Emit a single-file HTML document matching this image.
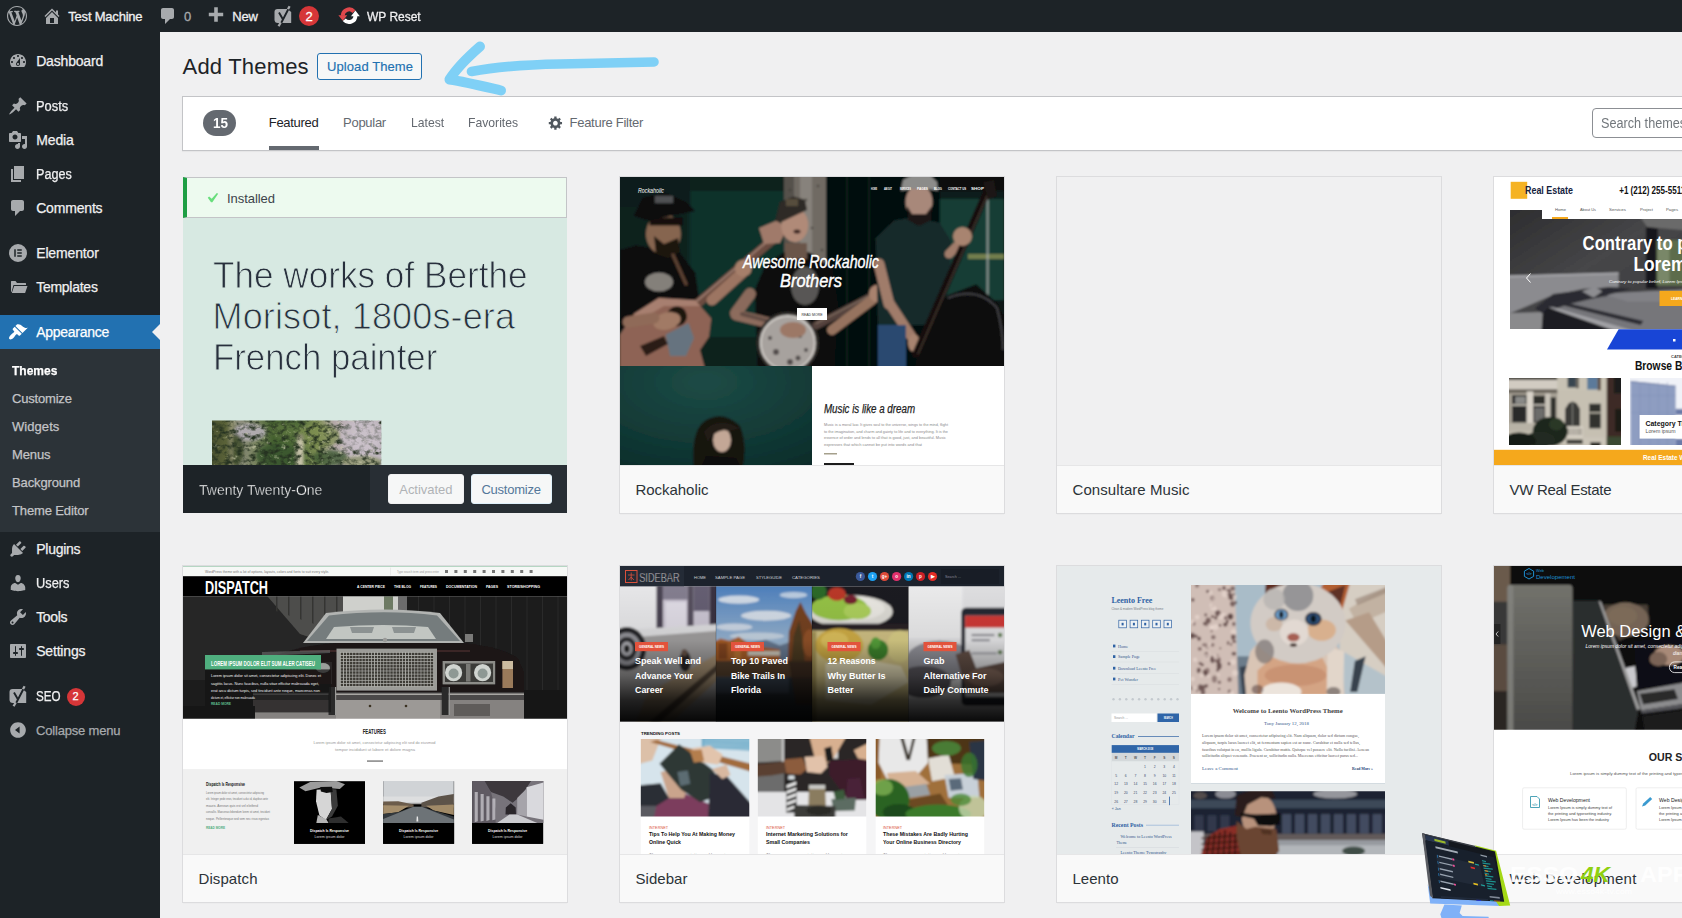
<!DOCTYPE html>
<html lang="en">
<head>
<meta charset="utf-8">
<title>Add Themes ‹ Test Machine — WordPress</title>
<style>
*{box-sizing:border-box;margin:0;padding:0}
html,body{width:1682px;height:918px;overflow:hidden;background:#f0f0f1;font-family:"Liberation Sans",sans-serif;color:#3c434a}
#wrap{position:relative;width:1682px;height:918px;overflow:hidden}
.abs{position:absolute}
.t{position:absolute;white-space:nowrap;line-height:1}
#bar{position:absolute;left:0;top:0;width:1682px;height:32px;background:#1d2327}
#bar .t{color:#f0f0f1;-webkit-text-stroke-width:0.3px}
#side{position:absolute;left:0;top:0;width:160px;height:918px;background:#1d2327}
#side .t{color:#f0f0f1;-webkit-text-stroke-width:0.25px}
#side svg.ic{position:absolute;left:8px;width:20px;height:20px;fill:#a7aaad}
.card{position:absolute;width:386px;height:338px;background:#fff;border:1px solid #dcdcde;box-shadow:0 1px 1px -1px rgba(0,0,0,.1);overflow:hidden}
.shot{position:absolute;left:0;top:0;width:384px;height:288px;overflow:hidden}
.shot svg{position:absolute;left:0;top:0}
.name{position:absolute;left:0;top:288px;width:384px;height:48px;background:#f9f9f9;border-top:1px solid #e6e6e7}
</style>
</head>
<body>
<div id="wrap">
<div id="main">
<span class="t" style="left:182.60px;top:55.88px;font-size:22px;letter-spacing:0.185px;color:#1d2327;">Add Themes</span>
<div class="abs" style="left:317px;top:53px;width:105px;height:27px;border:1px solid #2271b1;border-radius:3px;background:#f6f7f7"></div>
<span class="t" style="left:327.00px;top:60.00px;font-size:13px;letter-spacing:0.088px;color:#2271b1;-webkit-text-stroke:0.15px #2271b1;">Upload Theme</span>
<svg class="abs" style="left:430px;top:36px;width:240px;height:64px" viewBox="430 36 240 64" fill="none" stroke="#7fd0f6" stroke-linecap="round" stroke-linejoin="round"><path d="M480 46.500C468 57 456 69 449.500 79.500C466 82 486 87 501 90.500" stroke-width="10"/><path d="M471.500 71.500C500 66 530 64.500 560 64C595 63 625 62.500 654 62" stroke-width="9.600"/></svg>
<div class="abs" style="left:182px;top:96px;width:1520px;height:55px;background:#fff;border:1px solid #c3c4c7;box-shadow:0 1px 1px rgba(0,0,0,.04)"></div>
<div class="abs" style="left:203px;top:110px;width:33px;height:26px;border-radius:13px;background:#646970"></div>
<span class="t" style="left:212.50px;top:116.15px;font-size:14px;transform:scaleX(0.9632);transform-origin:0 0;color:#fff;font-weight:bold;">15</span>
<span class="t" style="left:268.80px;top:116.00px;font-size:13px;letter-spacing:-0.305px;color:#1d2327;">Featured</span>
<div class="abs" style="left:269px;top:146px;width:50px;height:4px;background:#646970"></div>
<span class="t" style="left:343.10px;top:116.00px;font-size:13px;letter-spacing:-0.285px;color:#646970;">Popular</span>
<span class="t" style="left:410.50px;top:116.00px;font-size:13px;transform:scaleX(0.9347);transform-origin:0 0;color:#646970;">Latest</span>
<span class="t" style="left:467.90px;top:116.00px;font-size:13px;transform:scaleX(0.9371);transform-origin:0 0;color:#646970;">Favorites</span>
<svg class="abs" style="left:547.800px;top:114.800px;width:15.600px;height:15.600px" viewBox="0 0 20 20" fill="#50575e"><path fill-rule="evenodd" d="M18 12h-2.180c-.170.700-.440 1.350-.810 1.930l1.540 1.540-2.100 2.100-1.540-1.540c-.580.360-1.230.630-1.910.790V19H8v-2.180c-.680-.160-1.330-.430-1.910-.790l-1.540 1.540-2.120-2.120 1.540-1.540c-.360-.580-.630-1.230-.790-1.910H1V9.030h2.170c.160-.700.440-1.350.800-1.940L2.430 5.550l2.100-2.100 1.540 1.540c.580-.370 1.240-.640 1.930-.810V2h3v2.180c.680.160 1.330.430 1.910.790l1.540-1.540 2.120 2.120-1.540 1.540c.360.590.640 1.240.800 1.940H18V12zm-8.500 1.500c1.660 0 3-1.340 3-3s-1.340-3-3-3-3 1.340-3 3 1.340 3 3 3z"/></svg>
<span class="t" style="left:569.50px;top:116.00px;font-size:13px;letter-spacing:-0.270px;color:#646970;">Feature Filter</span>
<div class="abs" style="left:1592px;top:108px;width:120px;height:30px;border:1px solid #8c8f94;border-radius:4px;background:#fff"></div>
<span class="t" style="left:1601.30px;top:115.95px;font-size:14px;transform:scaleX(0.9040);transform-origin:0 0;color:#72777c;">Search themes...</span>
<div class="abs" style="left:183px;top:177px;width:384px;height:336px;overflow:hidden;background:#d7e9e2"><div class="abs" style="left:-183px;top:-177px">
<div class="abs" style="left:183px;top:177px;width:384px;height:41px;background:#edfaef;border:1px solid #c3c4c7;border-left:4px solid #1e9e44"></div>
<svg class="abs" style="left:202px;top:188px;width:20px;height:20px" viewBox="0 0 20 20" fill="#68de7c"><path d="M14.830 4.890l1.340.940-5.810 8.380H9.020L5.780 9.670l1.340-1.250 2.570 2.400z"/></svg>
<span class="t" style="left:227.00px;top:192.00px;font-size:13px;letter-spacing:-0.053px;color:#3c434a;">Installed</span>
<span class="t" style="left:212.60px;top:257.93px;font-size:36px;transform:scaleX(0.9763);transform-origin:0 0;color:#28303d;-webkit-text-stroke:0.9px #d7e9e2;">The works of Berthe</span>
<span class="t" style="left:212.60px;top:298.83px;font-size:36px;letter-spacing:0.133px;color:#28303d;-webkit-text-stroke:0.9px #d7e9e2;">Morisot, 1800s-era</span>
<span class="t" style="left:212.60px;top:339.73px;font-size:36px;transform:scaleX(0.9663);transform-origin:0 0;color:#28303d;-webkit-text-stroke:0.9px #d7e9e2;">French painter</span>
<svg class="abs" style="left:212px;top:420px;width:170px;height:46px" viewBox="212 420 170 46" preserveAspectRatio="none"><defs><linearGradient id="pg" x1="0" x2="1"><stop offset="0" stop-color="#4a5230"/><stop offset=".08" stop-color="#5a6238"/><stop offset=".16" stop-color="#8c8c7c"/><stop offset=".26" stop-color="#76825c"/><stop offset=".36" stop-color="#44602f"/><stop offset=".5" stop-color="#4f6a38"/><stop offset=".62" stop-color="#7f8e54"/><stop offset=".72" stop-color="#b4a8a8"/><stop offset=".85" stop-color="#c6bcc6"/><stop offset="1" stop-color="#bfb6be"/></linearGradient>
<filter id="pn" x="0" y="0" width="100%" height="100%" color-interpolation-filters="sRGB"><feTurbulence type="fractalNoise" baseFrequency="0.16 0.2" numOctaves="3" seed="7" result="n"/><feColorMatrix in="n" type="matrix" values="0 0 0 0 0.15  0 0 0 0 0.2  0 0 0 0 0.13  3 0 0 0 -1.3" result="d"/><feColorMatrix in="n" type="matrix" values="0 0 0 0 0.8  0 0 0 0 0.8  0 0 0 0 0.68  0 3 0 0 -1.95" result="l"/><feComposite in="d" in2="SourceGraphic" operator="over" result="a"/><feComposite in="l" in2="a" operator="over"/></filter>
<filter id="pb"><feGaussianBlur stdDeviation="1.5"/></filter><clipPath id="pc"><rect x="212" y="420.4" width="169.3" height="46"/></clipPath></defs>
<g clip-path="url(#pc)"><g filter="url(#pn)"><rect x="212" y="420" width="170" height="46" fill="url(#pg)"/>
<g filter="url(#pb)"><ellipse cx="250" cy="432" rx="16" ry="9" fill="#b9b2bc" opacity=".85"/><ellipse cx="236" cy="450" rx="8" ry="16" fill="#3c4a28" opacity=".8"/><ellipse cx="278" cy="456" rx="22" ry="12" fill="#3a5630" opacity=".85"/><ellipse cx="318" cy="436" rx="22" ry="12" fill="#7d8e50" opacity=".7"/><ellipse cx="330" cy="458" rx="18" ry="8" fill="#3f5a32" opacity=".8"/><ellipse cx="285" cy="430" rx="14" ry="8" fill="#5d7440" opacity=".8"/><rect x="296.500" y="440" width="7" height="28" fill="#d2cab4" opacity=".9"/><ellipse cx="300" cy="437" rx="4" ry="3" fill="#8a8a70"/><ellipse cx="362" cy="462" rx="20" ry="6" fill="#8a9068" opacity=".8"/><rect x="230" y="420" width="2.500" height="46" fill="#b7b08c" opacity=".6"/><ellipse cx="365" cy="438" rx="14" ry="12" fill="#d2c8d0" opacity=".7"/></g></g><g filter="url(#pb)"><ellipse cx="362" cy="436" rx="22" ry="15" fill="#c8bec8" opacity=".6"/></g></g></svg><div class="abs" style="left:183px;top:465px;width:187px;height:48px;background:#1d2327"></div>
<div class="abs" style="left:370px;top:465px;width:197px;height:48px;background:#282e34"></div>
<span class="t" style="left:198.50px;top:482.30px;font-size:15px;transform:scaleX(0.9328);transform-origin:0 0;color:#fff;-webkit-text-stroke:0.35px #1d2327;">Twenty Twenty-One</span>
<div class="abs" style="left:388px;top:474px;width:76px;height:30px;border:1px solid #f0f0f1;border-radius:3px;background:#f6f7f7"></div>
<span class="t" style="left:399.30px;top:482.50px;font-size:13px;letter-spacing:-0.047px;color:#b0b3b6;">Activated</span>
<div class="abs" style="left:470.500px;top:474px;width:81px;height:30px;border:1.500px solid #dff0fa;border-radius:3px;background:#f6f7f7"></div>
<span class="t" style="left:481.40px;top:482.50px;font-size:13px;letter-spacing:-0.226px;color:#54779a;">Customize</span>
</div></div>
<div class="card" style="left:619px;top:176px">
<div class="shot"><div class="abs" style="left:-620px;top:-177px"><svg class="abs" style="left:620px;top:177px;width:384px;height:288px" viewBox="620 177 384 288" preserveAspectRatio="none"><defs><filter id="b1" x="-5%" y="-5%" width="110%" height="110%"><feGaussianBlur stdDeviation=".8"/></filter><filter id="b1b" x="-5%" y="-5%" width="110%" height="110%"><feGaussianBlur stdDeviation="3"/></filter><radialGradient id="tg" cx=".45" cy=".2" r=".9"><stop offset="0" stop-color="#1d4b46"/><stop offset=".6" stop-color="#123a36"/><stop offset="1" stop-color="#0c2c2a"/></radialGradient><clipPath id="c1"><rect x="620" y="177" width="384" height="189"/></clipPath><clipPath id="c1b"><rect x="620" y="366" width="192" height="99"/></clipPath></defs><rect x="620" y="177" width="384" height="288" fill="#fff" /><g clip-path="url(#c1)"><g filter="url(#b1)"><rect x="610" y="170" width="400" height="200" fill="#08100f" /><rect x="610" y="170" width="176" height="200" fill="#0a211f" /><rect x="688" y="191" width="96" height="146" fill="#0d302b" /><rect x="688" y="191" width="3" height="146" fill="#0a2a26" /><rect x="730" y="191" width="2" height="146" fill="#0c302b" /><rect x="620" y="177" width="70" height="30" fill="#091c1a" /><rect x="784" y="170" width="42" height="140" fill="#6f6a64" /><rect x="784" y="170" width="10" height="140" fill="#55514c" /><rect x="800" y="170" width="12" height="140" fill="#87827b" /><circle cx="790" cy="190" r="1.300" fill="#3c3834" opacity=".7"/><circle cx="806" cy="200" r="1.300" fill="#3c3834" opacity=".7"/><circle cx="818" cy="186" r="1.300" fill="#3c3834" opacity=".7"/><circle cx="796" cy="214" r="1.300" fill="#3c3834" opacity=".7"/><circle cx="812" cy="228" r="1.300" fill="#3c3834" opacity=".7"/><circle cx="822" cy="250" r="1.300" fill="#3c3834" opacity=".7"/><circle cx="804" cy="262" r="1.300" fill="#3c3834" opacity=".7"/><circle cx="790" cy="246" r="1.300" fill="#3c3834" opacity=".7"/><circle cx="816" cy="280" r="1.300" fill="#3c3834" opacity=".7"/><circle cx="798" cy="290" r="1.300" fill="#3c3834" opacity=".7"/><rect x="826" y="170" width="114" height="200" fill="#060b0a" /><rect x="846" y="177" width="2" height="190" fill="#0e1a18" /><rect x="868" y="177" width="2" height="190" fill="#0e1a18" /><rect x="940" y="191" width="64" height="114" fill="#173c36" /><rect x="940" y="191" width="64" height="8" fill="#0c1f1c" /><rect x="968" y="254" width="36" height="5" fill="#8a8f55" opacity=".8"/><rect x="940" y="300" width="64" height="70" fill="#0b1513" /><rect x="986.5" y="184" width="2.2" height="160" fill="#a9aeaa" opacity=".75"/><path d="M620.0 250.0 L636.0 245.5 L679.4 252.3 L695.3 272.9 L700.0 304.8 L660.0 320.0 L620.0 330.0 Z" fill="#0b0c0d" /><ellipse cx="663.400" cy="234" rx="17.500" ry="20.500" fill="#86654f"/><path d="M654.0 236.0 L664.0 244.0 L678.0 238.0 L680.0 252.0 L668.0 258.0 L656.0 254.0 Z" fill="#1c1410" /><rect x="649.7" y="217.5" width="33" height="8" fill="#14100e" /><path d="M633.7 215.8 L642.8 197.5 L665.7 193.0 L686.2 202.0 L695.3 211.0 L677.0 214.7 L647.4 220.4 Z" fill="#0c0e10" /><rect x="655" y="196" width="18" height="7" fill="#cfcfcf" opacity=".35"/><ellipse cx="659" cy="282" rx="14" ry="9.500" fill="#9a958e" opacity=".85"/><path d="M673 255 L686 284" stroke="#5a4030" stroke-width="3.5" stroke-linecap="round" fill="none" /><path d="M697 304 L780 233.5" stroke="#6b4c41" stroke-width="9" stroke-linecap="round" fill="none" /><path d="M697 301 L780 230.5" stroke="#a98a7c" stroke-width="2" stroke-linecap="round" fill="none" opacity=".7"/><path d="M759.0 228.0 L778.0 220.0 L786.0 230.0 L780.0 243.0 L764.0 244.0 Z" fill="#a07a6a" /><path d="M620.0 334.5 L633.7 314.0 L658.8 298.0 L695.3 300.3 L711.3 318.6 L709.0 336.8 L700.0 350.0 L706.0 372.0 L620.0 372.0 Z" fill="#8e6455" /><path d="M633.7 314.0 L658.8 298.0 L695.3 300.3 L700.0 306.0 L664.0 306.0 L640.0 320.0 Z" fill="#ae8676" opacity=".8"/><circle cx="677" cy="316.300" r="10" fill="#1a1210"/><path d="M665.7 334.5 L688.5 323.0 L694.0 338.0 L686.0 356.0 L670.0 356.0 Z" fill="#66737f" /><path d="M640.0 346.0 L664.0 336.0 L668.0 344.0 L646.0 356.0 Z" fill="#2a1c18" /><path d="M712 300 L742 273" stroke="#9c7562" stroke-width="11" stroke-linecap="round" fill="none" /><circle cx="743.300" cy="268.300" r="8.500" fill="#a67f6a"/><ellipse cx="667" cy="321" rx="14" ry="8.500" fill="#a17a65" transform="rotate(-15 667 321)"/><path d="M628 322 L654 318" stroke="#8f6a58" stroke-width="11" stroke-linecap="round" fill="none" /><path d="M754.7 290.0 L766.0 263.8 L784.4 252.3 L809.5 252.3 L832.3 268.3 L838.0 304.8 L834.0 372.0 L758.0 372.0 Z" fill="#0a0b0c" /><rect x="785" y="243" width="22" height="16" fill="#6a5448" /><ellipse cx="794.700" cy="225" rx="13.500" ry="17" fill="#b08a78"/><path d="M775.3 220.4 L779.8 202.0 L793.5 196.4 L805.0 199.8 L807.0 210.0 L779.8 222.7 Z" fill="#2e2a25" /><rect x="786" y="199" width="12" height="7" fill="#6a5e48" opacity=".7"/><ellipse cx="797" cy="231.500" rx="3.500" ry="2" fill="#3a2420"/><ellipse cx="805" cy="286" rx="14" ry="19" fill="#b8b4ac" opacity=".45"/><path d="M750 294 L736 313" stroke="#8a6a5c" stroke-width="12" stroke-linecap="round" fill="none" /><path d="M736 315 L790 328" stroke="#8d6c5d" stroke-width="11" stroke-linecap="round" fill="none" /><path d="M742 314 L776 323" stroke="#4a3a36" stroke-width="4" stroke-linecap="round" fill="none" opacity=".6"/><circle cx="787.800" cy="343" r="31" fill="#34302e"/><circle cx="787.800" cy="343" r="27" fill="#a7a29e"/><circle cx="787.800" cy="343" r="27" fill="none" stroke="#cfcbc6" stroke-width="2"/><circle cx="776" cy="352" r="3" fill="#3e3a38" opacity=".8"/><circle cx="798" cy="358" r="2.5" fill="#3e3a38" opacity=".8"/><circle cx="800" cy="336" r="2" fill="#3e3a38" opacity=".8"/><circle cx="770" cy="338" r="2" fill="#3e3a38" opacity=".8"/><circle cx="790" cy="362" r="3" fill="#3e3a38" opacity=".8"/><circle cx="782" cy="330" r="1.5" fill="#3e3a38" opacity=".8"/><circle cx="806" cy="350" r="2" fill="#3e3a38" opacity=".8"/><path d="M816.3 325.4 L926 268.3" stroke="#54433c" stroke-width="8" stroke-linecap="round" fill="none" /><path d="M816.3 323.4 L926 266.3" stroke="#8f7a6e" stroke-width="1.5" stroke-linecap="round" fill="none" opacity=".7"/><path d="M900.8 270.0 L922.0 258.0 L930.0 268.0 L926.0 284.0 L908.0 286.0 Z" fill="#1c1816" /><circle cx="906" cy="268" r="1.200" fill="#e8e8e8"/><circle cx="914" cy="263" r="1.200" fill="#e8e8e8"/><circle cx="922" cy="262" r="1.200" fill="#e8e8e8"/><circle cx="912" cy="282" r="1.200" fill="#e8e8e8"/><circle cx="920" cy="280" r="1.200" fill="#e8e8e8"/><ellipse cx="793" cy="330" rx="13" ry="8" fill="#9c7866"/><path d="M832 330 L872 300" stroke="#96735f" stroke-width="10" stroke-linecap="round" fill="none" /><circle cx="878" cy="293.400" r="9" fill="#a8826e"/><path d="M875.7 238.0 L894.0 220.4 L914.5 217.0 L939.6 222.7 L951.0 241.0 L950.0 272.9 L942.0 325.0 L878.0 325.0 Z" fill="#14292a" /><ellipse cx="919" cy="202" rx="13.500" ry="17" fill="#a8887a"/><path d="M907.0 206.0 L912.0 214.0 L926.0 214.0 L932.0 206.0 L931.0 220.0 L919.0 226.0 L908.0 220.0 Z" fill="#1c1614" /><path d="M900.8 190.7 L903.0 180.0 L912.0 175.0 L930.0 175.0 L937.0 182.0 L938.0 190.7 L920.0 188.0 Z" fill="#8c8c8a" /><path d="M879 264 L889 304" stroke="#a07c6a" stroke-width="11" stroke-linecap="round" fill="none" /><path d="M890 304 L911 336" stroke="#a07c6a" stroke-width="10" stroke-linecap="round" fill="none" /><ellipse cx="914" cy="343" rx="6" ry="9" fill="#a88470"/><rect x="878" y="325" width="28" height="46" fill="#2b4a70" /><path d="M949 254 L961 242" stroke="#a07c6a" stroke-width="9" stroke-linecap="round" fill="none" /><path d="M914.5 372.0 L923.6 327.7 L946.5 295.7 L976.2 284.3 L999.0 304.8 L1010.0 336.8 L1010.0 372.0 Z" fill="#0d0d0f" /><path d="M948 298 Q978 286 997 308 Q1003 330 1003 350" stroke="#4a4a4e" stroke-width="1.500" fill="none"/><path d="M987.6 190 L916 354" stroke="#17110f" stroke-width="7.5" stroke-linecap="round" fill="none" stroke-linecap="butt"/><path d="M989.6 190 L918 354" stroke="#5a4a42" stroke-width="1.2" stroke-linecap="round" fill="none" opacity=".7"/><path d="M983.0 182.0 L994.0 180.0 L997.0 196.0 L988.0 200.0 Z" fill="#1a1412" /><circle cx="962.500" cy="236.400" r="9.500" fill="#a8846f"/></g></g><text x="811" y="268" text-anchor="middle" font-family="Liberation Sans, sans-serif" font-style="italic" font-size="18" fill="#fff" stroke="#fff" stroke-width=".45" textLength="136" lengthAdjust="spacingAndGlyphs">Awesome Rockaholic</text><text x="811" y="287" text-anchor="middle" font-family="Liberation Sans, sans-serif" font-style="italic" font-size="18" fill="#fff" stroke="#fff" stroke-width=".45" textLength="62" lengthAdjust="spacingAndGlyphs">Brothers</text><rect x="797" y="308" width="30" height="12" fill="#fff" /><text x="812" y="316" text-anchor="middle" font-family="Liberation Sans, sans-serif" font-size="3.500" fill="#333">READ MORE</text><text x="638" y="193" font-family="Liberation Sans, sans-serif" font-style="italic" font-size="7" fill="#fff" textLength="26" lengthAdjust="spacingAndGlyphs">Rockaholic</text><text x="871" y="190" font-family="Liberation Sans, sans-serif" font-size="3.4" fill="#fff" text-anchor="start" font-weight="bold" textLength="6" lengthAdjust="spacingAndGlyphs" >HOME</text><text x="884" y="190" font-family="Liberation Sans, sans-serif" font-size="3.4" fill="#fff" text-anchor="start" font-weight="bold" textLength="8" lengthAdjust="spacingAndGlyphs" >ABOUT</text><text x="900" y="190" font-family="Liberation Sans, sans-serif" font-size="3.4" fill="#fff" text-anchor="start" font-weight="bold" textLength="11" lengthAdjust="spacingAndGlyphs" >SERVICES</text><text x="917" y="190" font-family="Liberation Sans, sans-serif" font-size="3.4" fill="#fff" text-anchor="start" font-weight="bold" textLength="11" lengthAdjust="spacingAndGlyphs" >PAGES</text><text x="934" y="190" font-family="Liberation Sans, sans-serif" font-size="3.4" fill="#fff" text-anchor="start" font-weight="bold" textLength="8" lengthAdjust="spacingAndGlyphs" >BLOG</text><text x="948" y="190" font-family="Liberation Sans, sans-serif" font-size="3.4" fill="#fff" text-anchor="start" font-weight="bold" textLength="18" lengthAdjust="spacingAndGlyphs" >CONTACT US</text><text x="971" y="190" font-family="Liberation Sans, sans-serif" font-size="3.4" fill="#fff" text-anchor="start" font-weight="bold" textLength="13" lengthAdjust="spacingAndGlyphs" >SHOP</text><g clip-path="url(#c1b)"><g filter="url(#b1)"><rect x="612" y="360" width="206" height="110" fill="url(#tg)" /><path d="M694 470 Q690 430 706 420 Q724 410 740 426 Q748 446 742 470 Z" fill="#171310"/><ellipse cx="722" cy="440" rx="9" ry="12" fill="#c3a796"/><path d="M704 432 Q716 416 740 428 Q730 432 724 430 Q712 432 708 442 Z" fill="#241b15"/><path d="M700 470 L706 456 L736 458 L742 470 Z" fill="#0e0c0b"/></g></g><text x="824" y="413" font-family="Liberation Sans, sans-serif" font-style="italic" font-size="12" fill="#222" stroke="#222" stroke-width=".25" textLength="91" lengthAdjust="spacingAndGlyphs">Music is like a dream</text><text x="824" y="426.4" font-family="Liberation Sans, sans-serif" font-size="3.5" fill="#8a8a8a" text-anchor="start" textLength="124" lengthAdjust="spacingAndGlyphs" >Music is a moral law. It gives soul to the universe, wings to the mind, flight</text><text x="824" y="432.79999999999995" font-family="Liberation Sans, sans-serif" font-size="3.5" fill="#8a8a8a" text-anchor="start" textLength="124" lengthAdjust="spacingAndGlyphs" >to the imagination, and charm and gaiety to life and to everything. It is the</text><text x="824" y="439.2" font-family="Liberation Sans, sans-serif" font-size="3.5" fill="#8a8a8a" text-anchor="start" textLength="122" lengthAdjust="spacingAndGlyphs" >essence of order and lends to all that is good, just, and beautiful. Music</text><text x="824" y="445.59999999999997" font-family="Liberation Sans, sans-serif" font-size="3.5" fill="#8a8a8a" text-anchor="start" textLength="98" lengthAdjust="spacingAndGlyphs" >expresses that which cannot be put into words and that</text><rect x="824" y="453" width="13" height="1.5" fill="#a5a08c" /><rect x="824" y="463" width="30" height="3" fill="#1c1c1c" /></svg></div></div>
<div class="name"><span class="t" style="left:15.50px;top:16.00px;font-size:15px;letter-spacing:-0.041px;color:#2c3338;">Rockaholic</span>
</div>
</div>
<div class="card" style="left:1056px;top:176px">
<div class="shot"><div class="abs" style="left:-1057px;top:-177px"><svg class="abs" style="left:1057px;top:177px;width:384px;height:288px" viewBox="1057 177 384 288" preserveAspectRatio="none"><rect x="1057" y="177" width="384" height="288" fill="#f0f0f1" /></svg></div></div>
<div class="name"><span class="t" style="left:15.50px;top:16.00px;font-size:15px;letter-spacing:0.075px;color:#2c3338;">Consultare Music</span>
</div>
</div>
<div class="card" style="left:1493px;top:176px">
<div class="shot"><div class="abs" style="left:-1494px;top:-177px"><svg class="abs" style="left:1494px;top:177px;width:384px;height:288px" viewBox="1494 177 384 288" preserveAspectRatio="none"><defs><filter id="b3" x="-5%" y="-5%" width="110%" height="110%"><feGaussianBlur stdDeviation=".8"/></filter><linearGradient id="g3w" x1="0" y1="0" x2="1" y2="1"><stop offset="0" stop-color="#2b2b2d"/><stop offset=".45" stop-color="#464648"/><stop offset="1" stop-color="#3a3a3c"/></linearGradient><clipPath id="c3"><rect x="1510" y="210" width="200" height="119"/></clipPath><clipPath id="c3b"><rect x="1509" y="378" width="112" height="67"/></clipPath><clipPath id="c3c"><rect x="1630" y="378" width="80" height="67"/></clipPath></defs><rect x="1494" y="177" width="384" height="288" fill="#fff" /><rect x="1510.7" y="181.8" width="16.5" height="17" fill="#f5b324" /><text x="1525" y="194.2" font-family="Liberation Sans, sans-serif" font-size="10.5" fill="#14213d" text-anchor="start" font-weight="bold" textLength="48" lengthAdjust="spacingAndGlyphs" >Real Estate</text><text x="1619.2" y="193.6" font-family="Liberation Sans, sans-serif" font-size="10.5" fill="#111" text-anchor="start" font-weight="bold" textLength="66.0" lengthAdjust="spacingAndGlyphs" >+1 (212) 255-5511</text><g clip-path="url(#c3)"><g filter="url(#b3)"><rect x="1500" y="205" width="200" height="130" fill="url(#g3w)" /><path d="M1640.7 217.8 L1693.0 217.8 L1693.0 230.9 L1647.3 227.0 Z" fill="#6a6a6a" /><path d="M1645.9 227.0 L1657.7 228.3 L1657.7 288.4 L1645.9 288.4 Z" fill="#19191b" /><path d="M1656.4 240.1 L1693.0 240.1 L1693.0 285.8 L1656.4 285.8 Z" fill="#5d6c4c" /><path d="M1657.7 241.4 L1669.5 241.4 L1669.5 283.2 L1657.7 283.2 Z" fill="#8c9a7c" opacity=".6"/><path d="M1507.4 275.6 L1618.5 272.5 L1618.5 287.4 L1583.2 288.7 L1549.2 296.5 L1507.4 314.6 Z" fill="#8b8b8f" /><path d="M1507.4 275.6 L1618.5 272.5 L1618.5 274.3 L1507.4 277.7 Z" fill="#a4a4a8" /><path d="M1507.4 313.3 L1544.0 312.0 L1542.7 332.9 L1507.4 332.9 Z" fill="#8a8a8c" /><path d="M1546.6 307.0 L1601.5 293.7 L1693.0 289.2 L1693.0 332.9 L1618.5 332.9 Z" fill="#76767a" /><path d="M1601.5 293.7 L1693.0 289.2 L1693.0 301.5 L1627.6 301.5 Z" fill="#858589" opacity=".8"/><path d="M1534.8 308.3 L1553.1 293.9 L1583.2 290.0 L1609.3 287.1 L1631.6 288.7 L1601.5 296.5 L1567.5 304.4 L1542.7 313.5 Z" fill="#2a2a30" /><path d="M1581.9 291.3 L1595.0 287.1 L1602.3 291.3 L1593.7 297.8 Z" fill="#8d8d91" /><path d="M1559.7 304.4 L1567.5 303.1 L1643.3 321.1 L1640.7 325.0 Z" fill="#2c2c32" /><path d="M1572.7 301.5 L1578.0 300.5 L1609.3 293.7 L1606.7 296.3 Z" fill="#34343a" /><path d="M1542.7 313.5 L1548.2 307.5 L1621.1 332.9 L1541.4 332.9 Z" fill="#1e1e22" /><path d="M1548.2 307.5 L1553.1 307.0 L1640.7 332.9 L1621.1 332.9 Z" fill="#b4b4b8" opacity=".7"/></g></g><rect x="1542" y="201.5" width="170" height="17.5" fill="#fff" /><text x="1555" y="211" font-family="Liberation Sans, sans-serif" font-size="4.2" fill="#555" text-anchor="start" textLength="11" lengthAdjust="spacingAndGlyphs" >Home</text><text x="1580" y="211" font-family="Liberation Sans, sans-serif" font-size="4.2" fill="#555" text-anchor="start" textLength="16" lengthAdjust="spacingAndGlyphs" >About Us</text><text x="1609" y="211" font-family="Liberation Sans, sans-serif" font-size="4.2" fill="#555" text-anchor="start" textLength="17" lengthAdjust="spacingAndGlyphs" >Services</text><text x="1640" y="211" font-family="Liberation Sans, sans-serif" font-size="4.2" fill="#555" text-anchor="start" textLength="13" lengthAdjust="spacingAndGlyphs" >Project</text><text x="1666" y="211" font-family="Liberation Sans, sans-serif" font-size="4.2" fill="#555" text-anchor="start" textLength="12" lengthAdjust="spacingAndGlyphs" >Pages</text><rect x="1552" y="217" width="16" height="2" fill="#f5a81c" /><text x="1582.6" y="250.4" font-family="Liberation Sans, sans-serif" font-size="19.5" fill="#fff" text-anchor="start" font-weight="bold" textLength="155.9" lengthAdjust="spacingAndGlyphs" >Contrary to popular</text><text x="1633.4" y="271.2" font-family="Liberation Sans, sans-serif" font-size="19.5" fill="#fff" text-anchor="start" font-weight="bold" textLength="108.9" lengthAdjust="spacingAndGlyphs" >Lorem Ipsum</text><text x="1609" y="282.6" font-family="Liberation Sans, sans-serif" font-size="4.2" fill="#fff" text-anchor="start" font-style="italic" textLength="92" lengthAdjust="spacingAndGlyphs" >Contrary to popular belief, Lorem Ipsum is not</text><rect x="1659.5" y="290.8" width="60" height="15.2" fill="#f5a81c" /><text x="1671" y="300" font-family="Liberation Sans, sans-serif" font-size="4" fill="#fff" text-anchor="start" font-weight="bold" textLength="22" lengthAdjust="spacingAndGlyphs" >LEARN MORE</text><path d="M1530.500 273.500 L1526.500 278 L1530.500 282.500" stroke="#fff" stroke-width="1" fill="none"/><path d="M1618.600 329.300 L1700 329.300 L1700 349.600 L1607 349.600 Z" fill="#1845d6"/><rect x="1673" y="339" width="2.5" height="2.5" fill="#fff" /><text x="1671" y="358" font-family="Liberation Sans, sans-serif" font-size="4" fill="#444" text-anchor="start" font-weight="bold" >CATEGORIES</text><text x="1634.9" y="370.3" font-family="Liberation Sans, sans-serif" font-size="13.5" fill="#111" text-anchor="start" font-weight="bold" textLength="100.7" lengthAdjust="spacingAndGlyphs" >Browse By Category</text><g clip-path="url(#c3b)"><g filter="url(#b3)"><path d="M1504.9 373.9 L1625.3 373.9 L1625.3 450.0 L1504.9 450.0 Z" fill="#c6c0b2" /><path d="M1504.9 373.9 L1557.4 373.9 L1557.4 380.3 L1504.9 380.3 Z" fill="#4a4640" /><path d="M1504.9 380.1 L1557.4 380.1 L1557.4 391.4 L1504.9 391.4 Z" fill="#d2ccc2" /><path d="M1504.9 389.3 L1557.4 389.3 L1557.4 393.4 L1504.9 393.4 Z" fill="#6a655c" /><path d="M1504.9 393.4 L1557.4 393.4 L1557.4 424.3 L1504.9 424.3 Z" fill="#a8a296" /><path d="M1512.1 395.0 L1526.7 395.0 L1526.7 422.4 L1512.1 422.4 Z" fill="#2c2c2a" /><path d="M1515.2 396.5 L1525.5 396.5 L1525.5 403.7 L1515.2 403.7 Z" fill="#8a8a88" /><path d="M1512.1 404.2 L1526.7 404.2 L1526.7 405.8 L1512.1 405.8 Z" fill="#cfc9bf" /><path d="M1526.7 391.4 L1533.3 391.4 L1533.3 423.5 L1526.7 423.5 Z" fill="#d8d2c8" /><path d="M1533.3 395.7 L1545.2 395.7 L1545.2 422.4 L1533.3 422.4 Z" fill="#2e2e2c" /><path d="M1534.3 407.8 L1544.0 407.8 L1544.0 421.2 L1534.3 421.2 Z" fill="#6c6c6a" /><path d="M1533.3 404.2 L1545.2 404.2 L1545.2 405.8 L1533.3 405.8 Z" fill="#cfc9bf" /><path d="M1545.2 393.4 L1550.4 393.4 L1550.4 423.5 L1545.2 423.5 Z" fill="#c8c2b8" /><path d="M1550.6 397.3 L1555.9 397.3 L1555.9 419.4 L1550.6 419.4 Z" fill="#33332f" /><path d="M1504.9 423.3 L1557.4 423.3 L1557.4 431.5 L1504.9 431.5 Z" fill="#b8b2a6" /><path d="M1557.4 373.9 L1606.7 373.9 L1606.7 390.3 L1557.4 390.3 Z" fill="#c8c2b4" /><path d="M1567.6 373.9 L1575.9 373.9 L1575.9 387.5 L1567.6 387.5 Z" fill="#39444f" /><path d="M1575.9 373.9 L1579.0 373.9 L1579.0 388.3 L1575.9 388.3 Z" fill="#6a665e" /><path d="M1587.2 373.9 L1597.7 373.9 L1597.7 389.5 L1587.2 389.5 Z" fill="#5b7a9a" /><path d="M1597.7 373.9 L1600.8 373.9 L1600.8 390.3 L1597.7 390.3 Z" fill="#5a4a40" /><path d="M1565.1 426.4 L1565.1 408.9 L1568.7 403.2 L1572.6 401.5 L1576.5 403.2 L1580.0 408.9 L1580.0 426.4 Z" fill="#3a3a38" /><path d="M1572.0 402.7 L1573.0 402.7 L1573.0 426.4 L1572.0 426.4 Z" fill="#7a7a76" /><path d="M1589.2 403.7 L1600.8 403.7 L1600.8 428.4 L1589.2 428.4 Z" fill="#33332f" /><path d="M1589.2 412.0 L1600.8 412.0 L1600.8 413.5 L1589.2 413.5 Z" fill="#b8b2a6" /><path d="M1566.1 426.4 L1582.7 426.4 L1582.7 437.2 L1566.1 437.2 Z" fill="#dcd6ca" /><path d="M1567.6 428.2 L1568.5 428.2 L1568.5 435.2 L1567.6 435.2 Z" fill="#6a665e" /><path d="M1569.8 428.2 L1570.6 428.2 L1570.6 435.2 L1569.8 435.2 Z" fill="#6a665e" /><path d="M1572.0 428.2 L1572.8 428.2 L1572.8 435.2 L1572.0 435.2 Z" fill="#6a665e" /><path d="M1574.1 428.2 L1574.9 428.2 L1574.9 435.2 L1574.1 435.2 Z" fill="#6a665e" /><path d="M1576.3 428.2 L1577.1 428.2 L1577.1 435.2 L1576.3 435.2 Z" fill="#6a665e" /><path d="M1578.4 428.2 L1579.3 428.2 L1579.3 435.2 L1578.4 435.2 Z" fill="#6a665e" /><path d="M1580.6 428.2 L1581.4 428.2 L1581.4 435.2 L1580.6 435.2 Z" fill="#6a665e" /><path d="M1564.6 437.2 L1606.7 437.2 L1606.7 450.0 L1564.6 450.0 Z" fill="#cbc5b8" /><path d="M1590.3 442.3 L1600.6 442.3 L1600.6 450.0 L1590.3 450.0 Z" fill="#2a2a28" /><path d="M1566.6 439.7 L1582.6 439.7 L1582.6 443.8 L1566.6 443.8 Z" fill="#3a3a36" /><path d="M1606.7 373.9 L1625.3 373.9 L1625.3 450.0 L1606.7 450.0 Z" fill="#3c2c26" /><path d="M1613.9 373.9 L1625.3 373.9 L1625.3 393.4 L1613.9 393.4 Z" fill="#1e1c1a" /><path d="M1615.0 408.9 L1625.3 408.9 L1625.3 431.5 L1615.0 431.5 Z" fill="#1c1a18" /><path d="M1606.7 436.6 L1625.3 436.6 L1625.3 450.0 L1606.7 450.0 Z" fill="#3a4a30" /><ellipse cx="1550.2" cy="431.5" rx="17.5" ry="14.4" fill="#1d261b" /><ellipse cx="1539.9" cy="439.7" rx="15.4" ry="8.2" fill="#222b20" /><ellipse cx="1556.3" cy="424.3" rx="7.2" ry="6.2" fill="#2c3828" /><ellipse cx="1519.3" cy="440.8" rx="16.5" ry="8.2" fill="#161a14" /></g></g><g clip-path="url(#c3c)"><g filter="url(#b3)"><path d="M1625.3 373.9 L1694.2 373.9 L1694.2 450.0 L1625.3 450.0 Z" fill="#f0f2f8" /><path d="M1630.4 381.1 L1675.7 385.8 L1675.7 450.0 L1630.4 450.0 Z" fill="#8e9dc1" /><path d="M1630.4 381.1 L1675.7 385.8 L1675.7 386.6 L1630.4 382.1 Z" fill="#6e7da3" /><path d="M1639.7 382.1 L1640.2 382.1 L1640.2 450.0 L1639.7 450.0 Z" fill="#7c8bb1" opacity=".8"/><path d="M1648.9 382.1 L1649.4 382.1 L1649.4 450.0 L1648.9 450.0 Z" fill="#7c8bb1" opacity=".8"/><path d="M1658.2 382.1 L1658.7 382.1 L1658.7 450.0 L1658.2 450.0 Z" fill="#7c8bb1" opacity=".8"/><path d="M1667.4 382.1 L1668.0 382.1 L1668.0 450.0 L1667.4 450.0 Z" fill="#7c8bb1" opacity=".8"/><path d="M1630.4 395.5 L1675.7 395.5 L1675.7 396.1 L1630.4 396.1 Z" fill="#7c8bb1" opacity=".8"/><path d="M1630.4 412.0 L1675.7 412.0 L1675.7 412.6 L1630.4 412.6 Z" fill="#7c8bb1" opacity=".8"/><path d="M1675.7 408.9 L1694.2 408.9 L1694.2 415.0 L1675.7 415.0 Z" fill="#6a7aa8" /><path d="M1675.7 438.7 L1694.2 438.7 L1694.2 450.0 L1675.7 450.0 Z" fill="#6a7aa8" /></g></g><rect x="1639.6" y="415" width="80" height="23.6" fill="#fff" /><text x="1645.5" y="425.7" font-family="Liberation Sans, sans-serif" font-size="8" fill="#111" text-anchor="start" font-weight="bold" textLength="46" lengthAdjust="spacingAndGlyphs" >Category Title</text><text x="1645.5" y="432.6" font-family="Liberation Sans, sans-serif" font-size="5" fill="#555" text-anchor="start" textLength="30" lengthAdjust="spacingAndGlyphs" >Lorem ipsum</text><rect x="1494" y="449.8" width="384" height="15.4" fill="#f5a81c" /><text x="1643" y="459.6" font-family="Liberation Sans, sans-serif" font-size="7.5" fill="#fff" text-anchor="start" font-weight="bold" textLength="70" lengthAdjust="spacingAndGlyphs" >Real Estate WordPress</text></svg></div></div>
<div class="name"><span class="t" style="left:15.50px;top:16.00px;font-size:15px;letter-spacing:-0.298px;color:#2c3338;">VW Real Estate</span>
</div>
</div>
<div class="card" style="left:182px;top:565px">
<div class="shot"><div class="abs" style="left:-183px;top:-566px"><svg class="abs" style="left:183px;top:566px;width:384px;height:288px" viewBox="183 566 384 288" preserveAspectRatio="none"><defs><filter id="b4" x="-5%" y="-5%" width="110%" height="110%"><feGaussianBlur stdDeviation=".7"/></filter><pattern id="mesh" x="340" y="652" width="3.1" height="3.1" patternUnits="userSpaceOnUse"><rect width="3.1" height="3.1" fill="#b0b0aa"/><rect x=".7" y=".7" width="2.4" height="2.4" fill="#3c3a36"/></pattern><clipPath id="c4"><rect x="183" y="596.6" width="384" height="122.2"/></clipPath></defs><rect x="183" y="566" width="384" height="288" fill="#fff" /><rect x="183" y="565.5" width="384" height="1.2" fill="#6fb08c" /><rect x="183" y="566.7" width="384" height="9.6" fill="#f6f8f6" /><text x="205" y="573.2" font-family="Liberation Sans, sans-serif" font-size="3.6" fill="#777" text-anchor="start" textLength="124" lengthAdjust="spacingAndGlyphs" >WordPress theme with a lot of options, layouts, colors and fonts to suit every style.</text><rect x="390" y="567.5" width="0.5" height="8" fill="#ddd" /><text x="397" y="573.2" font-family="Liberation Sans, sans-serif" font-size="3.6" fill="#999" text-anchor="start" textLength="42" lengthAdjust="spacingAndGlyphs" >Type search term and press enter</text><rect x="445.0" y="570" width="3" height="3" fill="#555" opacity=".8"/><rect x="454.4" y="570" width="3" height="3" fill="#555" opacity=".8"/><rect x="463.8" y="570" width="3" height="3" fill="#555" opacity=".8"/><rect x="473.2" y="570" width="3" height="3" fill="#555" opacity=".8"/><rect x="482.6" y="570" width="3" height="3" fill="#555" opacity=".8"/><rect x="492.0" y="570" width="3" height="3" fill="#555" opacity=".8"/><rect x="501.4" y="570" width="3" height="3" fill="#555" opacity=".8"/><rect x="510.8" y="570" width="3" height="3" fill="#555" opacity=".8"/><rect x="520.2" y="570" width="3" height="3" fill="#555" opacity=".8"/><rect x="529.6" y="570" width="3" height="3" fill="#555" opacity=".8"/><rect x="183" y="576.2" width="384" height="20.4" fill="#000" /><text x="205" y="593.6" font-family="Liberation Sans, sans-serif" font-size="18.5" fill="#fff" text-anchor="start" font-weight="bold" textLength="63" lengthAdjust="spacingAndGlyphs" >DISPATCH</text><text x="357" y="588" font-family="Liberation Sans, sans-serif" font-size="3.8" fill="#fff" text-anchor="start" font-weight="bold" textLength="28" lengthAdjust="spacingAndGlyphs" >A CENTER PIECE</text><text x="394" y="588" font-family="Liberation Sans, sans-serif" font-size="3.8" fill="#fff" text-anchor="start" font-weight="bold" textLength="17" lengthAdjust="spacingAndGlyphs" >THE BLOG</text><text x="420" y="588" font-family="Liberation Sans, sans-serif" font-size="3.8" fill="#fff" text-anchor="start" font-weight="bold" textLength="17" lengthAdjust="spacingAndGlyphs" >FEATURES</text><text x="446" y="588" font-family="Liberation Sans, sans-serif" font-size="3.8" fill="#fff" text-anchor="start" font-weight="bold" textLength="31" lengthAdjust="spacingAndGlyphs" >DOCUMENTATION</text><text x="486" y="588" font-family="Liberation Sans, sans-serif" font-size="3.8" fill="#fff" text-anchor="start" font-weight="bold" textLength="12" lengthAdjust="spacingAndGlyphs" >PAGES</text><text x="507" y="588" font-family="Liberation Sans, sans-serif" font-size="3.8" fill="#fff" text-anchor="start" font-weight="bold" textLength="33" lengthAdjust="spacingAndGlyphs" >STORE/SHOPPING</text><g clip-path="url(#c4)"><g filter="url(#b4)"><rect x="175" y="590" width="400" height="135" fill="#1f1f1f" /><path d="M175 590 L300 590 L345 640 L300 680 L175 680 Z" fill="#262626"/><path d="M262 590 L344 590 L344 612 L318 640 L300 634 Z" fill="#4e4e4c"/><path d="M276 596 L277.5 596 L277.5 612 L276 611 Z" fill="#343432"/><path d="M288 596 L289.5 596 L289.5 616 L288 615 Z" fill="#343432"/><path d="M300 596 L301.5 596 L301.5 620 L300 619 Z" fill="#343432"/><path d="M312 596 L313.5 596 L313.5 624 L312 623 Z" fill="#343432"/><path d="M324 596 L325.5 596 L325.5 628 L324 627 Z" fill="#343432"/><path d="M336 596 L337.5 596 L337.5 632 L336 631 Z" fill="#343432"/><rect x="343" y="590" width="56" height="23" fill="#cfd0cc" /><rect x="384" y="596" width="9" height="14" fill="#6d7a64" /><rect x="398" y="590" width="9" height="24" fill="#6c6c6c" /><rect x="407" y="590" width="170" height="135" fill="#1d1d1d" /><rect x="418.0" y="596" width="1" height="104" fill="#2b2b2b" /><rect x="433.5" y="596" width="1" height="104" fill="#2b2b2b" /><rect x="449.0" y="596" width="1" height="104" fill="#2b2b2b" /><rect x="464.5" y="596" width="1" height="104" fill="#2b2b2b" /><rect x="480.0" y="596" width="1" height="104" fill="#2b2b2b" /><rect x="495.5" y="596" width="1" height="104" fill="#2b2b2b" /><rect x="511.0" y="596" width="1" height="104" fill="#2b2b2b" /><rect x="526.5" y="596" width="1" height="104" fill="#2b2b2b" /><rect x="542.0" y="596" width="1" height="104" fill="#2b2b2b" /><rect x="557.5" y="596" width="1" height="104" fill="#2b2b2b" /><path d="M303 643 L326 613 Q385 606 440 613 L464 643 Z" fill="#b2b4b2"/><path d="M307 641 L329 615.500 Q385 609 437 615.500 L460 641 Z" fill="#747c7d"/><path d="M326 639 L334 627 Q385 623 428 627 L436 639 Z" fill="#c2c6c2"/><path d="M350 627 L352 633 L372 633 L374 627 Z" fill="#8c9292"/><path d="M392 627 L394 633 L414 633 L416 627 Z" fill="#8c9292"/><rect x="465" y="634" width="8" height="8" fill="#7a7a78" /><path d="M258 664 Q290 646 336 643 L462 643 Q500 646 518 658 L524 672 L524 700 L258 700 Z" fill="#1a1617"/><path d="M300 650 L470 650 L470 652 L300 652 Z" fill="#4a2e30" opacity=".7"/><circle cx="385" cy="640" r="2.200" fill="#9a9a98"/><rect x="336.5" y="648.6" width="100.5" height="42" fill="#9c9c98" /><rect x="340" y="652" width="93.5" height="35" fill="url(#mesh)" /><rect x="442.6" y="661" width="52.6" height="23.4" fill="#8c8c88" /><rect x="445" y="663.5" width="48" height="18.5" fill="#3a3a38" /><circle cx="453.600" cy="672.700" r="8.600" fill="#d0d4d0"/><circle cx="482.600" cy="672.700" r="8.600" fill="#d0d4d0"/><circle cx="453.600" cy="673.500" r="5" fill="#8e9894"/><circle cx="482.600" cy="673.500" r="5" fill="#8e9894"/><rect x="466" y="664" width="4.5" height="17.5" fill="#7a7a76" /><rect x="502.4" y="661" width="10.6" height="27" fill="#9a7a5a" /><rect x="502.4" y="661" width="10.6" height="8" fill="#cbbba0" /><rect x="286" y="662" width="46" height="22" fill="#2a2627" /><ellipse cx="323" cy="668" rx="7" ry="5" fill="#9a9e9a"/><path d="M262 652 L330 650 L330 653 L262 656 Z" fill="#6a6a6a" opacity=".6"/><rect x="253" y="692.3" width="271" height="8" fill="#4c4a4a" /><rect x="253" y="693.5" width="271" height="1.5" fill="#a8a6a2" /><rect x="253" y="700" width="271" height="19" fill="#858280" /><rect x="336" y="700" width="104" height="19" fill="#9c9996" /><rect x="328.5" y="687" width="6.5" height="28" fill="#2c2c2c" /><rect x="441.7" y="687" width="7" height="28" fill="#2c2c2c" /><rect x="335" y="687" width="1.2" height="28" fill="#9a9a98" /><rect x="448.7" y="687" width="1.2" height="28" fill="#9a9a98" /><rect x="454" y="704" width="36" height="12" fill="#5e5c5a" /><circle cx="370" cy="706" r="1.300" fill="#3a3020"/><circle cx="406" cy="706" r="1.300" fill="#3a3020"/><rect x="524" y="690" width="50" height="30" fill="#161616" /><rect x="183" y="706" width="72" height="14" fill="#141414" /><rect x="205" y="669.4" width="126" height="43" fill="#151515" opacity=".72"/></g></g><rect x="205" y="655" width="116" height="14.4" fill="#4fae7e" /><text x="211" y="665.8" font-family="Liberation Sans, sans-serif" font-size="8" fill="#fff" text-anchor="start" font-weight="bold" textLength="104" lengthAdjust="spacingAndGlyphs" >LOREM IPSUM DOLOR ELIT SUM ALER CATISEU</text><text x="211" y="677.4" font-family="Liberation Sans, sans-serif" font-size="3.7" fill="#f4f4f4" text-anchor="start" textLength="110" lengthAdjust="spacingAndGlyphs" >Lorem ipsum dolor sit amet, consectetur adipiscing elit. Donec et</text><text x="211" y="684.6999999999999" font-family="Liberation Sans, sans-serif" font-size="3.7" fill="#f4f4f4" text-anchor="start" textLength="108" lengthAdjust="spacingAndGlyphs" >sagittis lacus. Nunc faucibus, nulla vitae efficitur malesuada eget,</text><text x="211" y="692.0" font-family="Liberation Sans, sans-serif" font-size="3.7" fill="#f4f4f4" text-anchor="start" textLength="109" lengthAdjust="spacingAndGlyphs" >erat arcu dictum turpis, sed tincidunt ante neque, maecenas non</text><text x="211" y="699.3" font-family="Liberation Sans, sans-serif" font-size="3.7" fill="#f4f4f4" text-anchor="start" textLength="44" lengthAdjust="spacingAndGlyphs" >dictum et, efficitur non malesuada</text><text x="211" y="705.3" font-family="Liberation Sans, sans-serif" font-size="3.8" fill="#5fbe8e" text-anchor="start" font-weight="bold" textLength="20" lengthAdjust="spacingAndGlyphs" >READ MORE</text><text x="374.3" y="733.9" font-family="Liberation Sans, sans-serif" font-size="7.6" fill="#222" text-anchor="middle" font-weight="bold" textLength="23.2" lengthAdjust="spacingAndGlyphs" >FEATURES</text><text x="374.5" y="744.2" font-family="Liberation Sans, sans-serif" font-size="3.8" fill="#999" text-anchor="middle" textLength="122" lengthAdjust="spacingAndGlyphs" >Lorem ipsum dolor sit amet, consectetur adipiscing elit sed do eiusmod</text><text x="375" y="751.2" font-family="Liberation Sans, sans-serif" font-size="3.8" fill="#999" text-anchor="middle" textLength="80" lengthAdjust="spacingAndGlyphs" >tempor incididunt ut labore et dolore magna</text><rect x="367" y="760.6" width="16" height="0.9" fill="#333" /><rect x="183" y="769.1" width="384" height="85" fill="#f0f0f0" /><text x="206" y="785.6" font-family="Liberation Sans, sans-serif" font-size="4.6" fill="#111" text-anchor="start" font-weight="bold" textLength="39" lengthAdjust="spacingAndGlyphs" >Dispatch Is Responsive</text><text x="206" y="793.8" font-family="Liberation Sans, sans-serif" font-size="3.4" fill="#777" text-anchor="start" textLength="58" lengthAdjust="spacingAndGlyphs" >Lorem ipsum dolor sit amet, consectetur adipiscing</text><text x="206" y="800.3" font-family="Liberation Sans, sans-serif" font-size="3.4" fill="#777" text-anchor="start" textLength="62" lengthAdjust="spacingAndGlyphs" >elit. Integer pede eros, tincidunt a dui id, dapibus ante</text><text x="206" y="806.8" font-family="Liberation Sans, sans-serif" font-size="3.4" fill="#777" text-anchor="start" textLength="52" lengthAdjust="spacingAndGlyphs" >mauris. Aenean quis est vel eleifend</text><text x="206" y="813.3" font-family="Liberation Sans, sans-serif" font-size="3.4" fill="#777" text-anchor="start" textLength="64" lengthAdjust="spacingAndGlyphs" >convallis. Maecenas bibendum lorem sit amet, tincidunt</text><text x="206" y="819.8" font-family="Liberation Sans, sans-serif" font-size="3.4" fill="#777" text-anchor="start" textLength="63" lengthAdjust="spacingAndGlyphs" >neque. Pellentesque sed sem nec risus egestas</text><text x="206" y="829" font-family="Liberation Sans, sans-serif" font-size="3.8" fill="#4fae7e" text-anchor="start" font-weight="bold" textLength="19" lengthAdjust="spacingAndGlyphs" >READ MORE</text><rect x="294" y="781.2" width="71" height="62.6" fill="#000" /><rect x="383.1" y="781.2" width="71" height="62.6" fill="#000" /><rect x="472.1" y="781.2" width="71" height="62.6" fill="#000" /><g filter="url(#b4)"><path d="M299.3 787.6 L310.1 782.0 L336.4 781.1 L345.0 784.2 L339.8 789.1 L320.9 787.6 L305.5 791.3 Z" fill="#9c9c9c" /><path d="M316.6 789.7 L330.5 788.8 L332.0 808.9 L325.9 820.0 L319.4 815.4 L316.0 801.2 Z" fill="#d6d6d6" /><path d="M330.5 788.8 L336.4 789.4 L337.9 805.8 L332.0 816.6 L325.9 820.0 L332.0 808.9 Z" fill="#3a3a3a" /><path d="M320.3 787.0 L332.0 786.7 L332.7 791.9 L326.5 793.1 L320.9 791.6 Z" fill="#0e0e0e" /><path d="M317.8 815.1 L326.5 819.4 L328.6 823.1 L316.3 823.1 Z" fill="#b4b4b4" /><path d="M328.6 818.5 L341.0 816.6 L348.7 823.1 L328.6 823.1 Z" fill="#2e2e2e" /><path d="M383.2 781.1 L453.8 781.1 L453.8 802.7 L383.2 802.7 Z" fill="#d0d3d6" /><path d="M383.2 796.5 L453.8 796.5 L453.8 804.3 L383.2 804.3 Z" fill="#e2e2e2" opacity=".7"/><path d="M383.2 801.5 L398.2 801.2 L413.6 804.6 L413.6 807.4 L383.2 807.4 Z" fill="#6c5c4c" /><path d="M421.4 802.7 L438.4 796.5 L453.8 794.1 L453.8 807.4 L421.4 807.4 Z" fill="#5c524a" /><path d="M383.2 805.2 L409.0 805.8 L398.2 812.3 L383.2 813.9 Z" fill="#a58e6c" /><path d="M426.0 805.8 L453.8 804.6 L453.8 815.1 L433.7 810.5 Z" fill="#a08a68" /><path d="M383.2 813.9 L398.2 812.3 L412.1 806.7 L422.9 806.7 L433.7 810.5 L453.8 816.6 L453.8 823.1 L383.2 823.1 Z" fill="#33383c" /><path d="M413.6 806.7 L421.7 806.7 L453.8 819.4 L453.8 823.1 L383.2 823.1 L383.2 819.1 Z" fill="#6d7377" /><path d="M416.7 816.6 L418.0 816.6 L418.3 821.6 L416.4 821.6 Z" fill="#e8e8e8" /><path d="M472.4 781.1 L543.5 781.1 L543.5 823.1 L472.4 823.1 Z" fill="#77737a" /><path d="M483.2 781.1 L531.1 781.1 L521.8 795.0 L512.6 802.7 L503.3 796.5 L490.9 791.9 Z" fill="#3c383e" /><path d="M472.4 781.1 L484.7 781.1 L490.9 791.9 L495.6 808.9 L495.6 823.1 L472.4 823.1 Z" fill="#5e5a62" /><path d="M474.7 791.9 L477.8 791.9 L477.8 821.3 L474.7 822.2 Z" fill="#c4c2c8" opacity=".8"/><path d="M480.6 794.1 L483.7 794.1 L483.7 820.7 L480.6 821.6 Z" fill="#c4c2c8" opacity=".8"/><path d="M486.4 796.2 L489.5 796.2 L489.5 820.0 L486.4 821.0 Z" fill="#c4c2c8" opacity=".8"/><path d="M492.3 798.4 L495.4 798.4 L495.4 819.4 L492.3 820.3 Z" fill="#c4c2c8" opacity=".8"/><path d="M526.5 787.3 L543.5 782.6 L543.5 819.7 L526.5 816.6 Z" fill="#d9d9dd" /><path d="M517.2 798.1 L526.5 788.8 L526.5 816.6 L517.2 814.5 Z" fill="#a6a4aa" /><path d="M505.5 814.5 L505.8 807.4 L510.7 803.3 L515.7 807.4 L516.0 814.5 Z" fill="#2a262c" /><path d="M497.1 823.1 L509.5 814.5 L517.2 814.5 L537.3 823.1 Z" fill="#cbcbcf" /></g><rect x="294" y="823" width="71" height="20.8" fill="#000" /><text x="329.5" y="832" font-family="Liberation Sans, sans-serif" font-size="4.4" fill="#fff" text-anchor="middle" font-weight="bold" textLength="39" lengthAdjust="spacingAndGlyphs" >Dispatch Is Responsive</text><text x="329.5" y="838.4" font-family="Liberation Sans, sans-serif" font-size="3.4" fill="#ddd" text-anchor="middle" textLength="30" lengthAdjust="spacingAndGlyphs" >Lorem ipsum dolor</text><rect x="383.1" y="823" width="71" height="20.8" fill="#000" /><text x="418.6" y="832" font-family="Liberation Sans, sans-serif" font-size="4.4" fill="#fff" text-anchor="middle" font-weight="bold" textLength="39" lengthAdjust="spacingAndGlyphs" >Dispatch Is Responsive</text><text x="418.6" y="838.4" font-family="Liberation Sans, sans-serif" font-size="3.4" fill="#ddd" text-anchor="middle" textLength="30" lengthAdjust="spacingAndGlyphs" >Lorem ipsum dolor</text><rect x="472.1" y="823" width="71" height="20.8" fill="#000" /><text x="507.6" y="832" font-family="Liberation Sans, sans-serif" font-size="4.4" fill="#fff" text-anchor="middle" font-weight="bold" textLength="39" lengthAdjust="spacingAndGlyphs" >Dispatch Is Responsive</text><text x="507.6" y="838.4" font-family="Liberation Sans, sans-serif" font-size="3.4" fill="#ddd" text-anchor="middle" textLength="30" lengthAdjust="spacingAndGlyphs" >Lorem ipsum dolor</text></svg></div></div>
<div class="name"><span class="t" style="left:15.50px;top:16.00px;font-size:15px;letter-spacing:0.091px;color:#2c3338;">Dispatch</span>
</div>
</div>
<div class="card" style="left:619px;top:565px">
<div class="shot"><div class="abs" style="left:-620px;top:-566px"><svg class="abs" style="left:620px;top:566px;width:384px;height:288px" viewBox="620 566 384 288" preserveAspectRatio="none"><defs><filter id="b5" x="-5%" y="-5%" width="110%" height="110%"><feGaussianBlur stdDeviation=".9"/></filter><linearGradient id="g5d" x1="0" y1="0" x2="0" y2="1"><stop offset="0" stop-color="#000" stop-opacity=".05"/><stop offset=".4" stop-color="#000" stop-opacity=".12"/><stop offset=".66" stop-color="#000" stop-opacity=".45"/><stop offset=".84" stop-color="#000" stop-opacity=".8"/><stop offset="1" stop-color="#000" stop-opacity=".96"/></linearGradient><linearGradient id="g5s" x1="0" y1="0" x2="0" y2="1"><stop offset="0" stop-color="#4a80c2"/><stop offset="1" stop-color="#b4cce2"/></linearGradient><clipPath id="c5"><rect x="620" y="586.5" width="384" height="135.1"/></clipPath><clipPath id="c50"><rect x="640.8" y="739" width="108.5" height="77.5"/></clipPath><clipPath id="c51"><rect x="757.8" y="739" width="108.5" height="77.5"/></clipPath><clipPath id="c52"><rect x="875.7" y="739" width="108.5" height="77.5"/></clipPath></defs><rect x="620" y="566" width="384" height="288" fill="#f5f5f6" /><rect x="620" y="566" width="384" height="20.5" fill="#1c222c" /><rect x="620" y="566" width="64" height="20.5" fill="#242b36" /><rect x="625.500" y="570.500" width="11.500" height="12" fill="none" stroke="#d9513c" stroke-width="1"/><path d="M631.200 572.500v8M628 575h6.500M628.500 580l2.700-3 2.700 3" stroke="#d9513c" stroke-width=".8" fill="none"/><text x="639.2" y="581.6" font-family="Liberation Sans, sans-serif" font-size="12" fill="#e8e8ea" text-anchor="start" textLength="40.4" lengthAdjust="spacingAndGlyphs" stroke="#1c222c" stroke-width=".5">SIDEBAR</text><text x="694" y="578.6" font-family="Liberation Sans, sans-serif" font-size="4.4" fill="#d0d0d4" text-anchor="start" textLength="12" lengthAdjust="spacingAndGlyphs" >HOME</text><text x="715" y="578.6" font-family="Liberation Sans, sans-serif" font-size="4.4" fill="#d0d0d4" text-anchor="start" textLength="30" lengthAdjust="spacingAndGlyphs" >SAMPLE PAGE</text><text x="756" y="578.6" font-family="Liberation Sans, sans-serif" font-size="4.4" fill="#d0d0d4" text-anchor="start" textLength="26" lengthAdjust="spacingAndGlyphs" >STYLEGUIDE</text><text x="792" y="578.6" font-family="Liberation Sans, sans-serif" font-size="4.4" fill="#d0d0d4" text-anchor="start" textLength="28" lengthAdjust="spacingAndGlyphs" >CATEGORIES</text><circle cx="860.4" cy="576.500" r="4.600" fill="#3b5998"/><text x="860.4" y="578.3" font-family="Liberation Sans, sans-serif" font-size="4.6" fill="#fff" text-anchor="middle" font-weight="bold" >f</text><circle cx="872.5" cy="576.500" r="4.600" fill="#1da1f2"/><text x="872.5" y="578.3" font-family="Liberation Sans, sans-serif" font-size="4.6" fill="#fff" text-anchor="middle" font-weight="bold" >t</text><circle cx="884.5" cy="576.500" r="4.600" fill="#dd4b39"/><text x="884.5" y="578.3" font-family="Liberation Sans, sans-serif" font-size="4.6" fill="#fff" text-anchor="middle" font-weight="bold" >g+</text><circle cx="896.6" cy="576.500" r="4.600" fill="#e1306c"/><text x="896.6" y="578.3" font-family="Liberation Sans, sans-serif" font-size="4.6" fill="#fff" text-anchor="middle" font-weight="bold" >o</text><circle cx="908.6" cy="576.500" r="4.600" fill="#0077b5"/><text x="908.6" y="578.3" font-family="Liberation Sans, sans-serif" font-size="4.6" fill="#fff" text-anchor="middle" font-weight="bold" >in</text><circle cx="920.5" cy="576.500" r="4.600" fill="#cb2027"/><text x="920.5" y="578.3" font-family="Liberation Sans, sans-serif" font-size="4.6" fill="#fff" text-anchor="middle" font-weight="bold" >p</text><circle cx="932.5" cy="576.500" r="4.600" fill="#e52d27"/><text x="932.5" y="578.3" font-family="Liberation Sans, sans-serif" font-size="4.6" fill="#fff" text-anchor="middle" font-weight="bold" >▶</text><rect x="941" y="569" width="58" height="15" fill="#181d26" /><text x="945" y="578.2" font-family="Liberation Sans, sans-serif" font-size="4" fill="#889" text-anchor="start" textLength="16" lengthAdjust="spacingAndGlyphs" >Search ...</text><clipPath id="c5p0"><rect x="620" y="586.5" width="96" height="135.1"/></clipPath><clipPath id="c5p1"><rect x="716" y="586.5" width="96" height="135.1"/></clipPath><clipPath id="c5p2"><rect x="812" y="586.5" width="96.6" height="135.1"/></clipPath><clipPath id="c5p3"><rect x="908.6" y="586.5" width="95.4" height="135.1"/></clipPath><g clip-path="url(#c5p0)"><g filter="url(#b5)"><rect x="615.4" y="581.4" width="105.0" height="146.1" fill="#f2f2f4" /><rect x="656.5" y="581.4" width="63.9" height="57.1" fill="#d4cedc" /><rect x="656.5" y="581.4" width="6.4" height="57.1" fill="#4e4656" /><rect x="687.6" y="581.4" width="5.9" height="57.1" fill="#5a5262" /><rect x="709.5" y="581.4" width="11.0" height="57.1" fill="#3c3644" /><rect x="662.9" y="581.4" width="24.7" height="18.3" fill="#8a8496" /><rect x="693.5" y="581.4" width="16.0" height="29.7" fill="#6a6478" /><rect x="665.7" y="602.0" width="20.5" height="29.7" fill="#eae6f0" /><path d="M615.4 631.7 L720.5 624.8 L720.5 727.6 L615.4 727.6 Z" fill="#a8a6a6" /><path d="M615.4 630.7 L720.5 623.9 L720.5 630.7 L615.4 638.5 Z" fill="#e8e8ea" /><ellipse cx="626.8" cy="648.8" rx="19.4" ry="21.7" fill="#26262a" /><ellipse cx="626.8" cy="648.8" rx="14.2" ry="16.4" fill="#9a9aa0" /><ellipse cx="626.8" cy="648.8" rx="10.0" ry="11.9" fill="#2e2e32" /><ellipse cx="626.8" cy="648.8" rx="5.9" ry="7.3" fill="#b4b4ba" /><ellipse cx="626.8" cy="648.8" rx="2.7" ry="3.7" fill="#222" /><path d="M647.4 693.3 L720.5 652.2 L720.5 677.3 L665.7 727.6 L633.7 727.6 Z" fill="#b09a7c" /><path d="M642.8 727.6 L720.5 661.3 L720.5 668.2 L654.2 727.6 Z" fill="#5a4c3c" /><ellipse cx="685.1" cy="661.3" rx="5.9" ry="10.5" fill="#2c2628" /><ellipse cx="684.4" cy="652.7" rx="3.0" ry="3.4" fill="#6a5448" /></g></g><g clip-path="url(#c5p1)"><g filter="url(#b5)"><rect x="711.3" y="581.4" width="105.0" height="73.1" fill="url(#g5s)" /><ellipse cx="738.7" cy="599.7" rx="20.5" ry="4.1" fill="#eef2f8" opacity=".85"/><ellipse cx="766.1" cy="615.7" rx="25.1" ry="5.0" fill="#eef2f8" opacity=".85"/><ellipse cx="734.2" cy="627.1" rx="18.3" ry="3.7" fill="#eef2f8" opacity=".75"/><ellipse cx="793.5" cy="595.1" rx="13.7" ry="3.2" fill="#eef2f8" opacity=".7"/><ellipse cx="757.0" cy="636.2" rx="27.4" ry="3.7" fill="#e4ecf4" opacity=".7"/><path d="M711.3 652.2 L747.9 643.1 L766.1 639.7 L779.8 645.4 L793.5 640.8 L816.3 649.9 L816.3 663.6 L711.3 663.6 Z" fill="#6c7f99" /><path d="M711.3 643.1 L720.5 638.5 L729.6 640.8 L738.7 636.7 L747.9 643.1 L757.0 645.8 L766.1 647.6 L779.8 649.5 L779.8 663.6 L711.3 663.6 Z" fill="#b0642a" /><rect x="718.2" y="643.1" width="9.1" height="16.0" fill="#7a3e1c" opacity=".7"/><rect x="734.2" y="640.8" width="6.8" height="18.3" fill="#c8803a" opacity=".7"/><path d="M787.8 663.6 L788.9 631.7 L795.8 611.1 L800.4 602.0 L806.1 613.4 L811.8 622.5 L816.3 631.7 L816.3 663.6 Z" fill="#7a4424" /><path d="M791.2 663.6 L793.5 636.2 L799.2 620.2 L802.6 638.5 L804.9 663.6 Z" fill="#3e3a22" opacity=".7"/><ellipse cx="809.5" cy="643.1" rx="6.8" ry="13.7" fill="#a05a2a" opacity=".8"/><rect x="747.9" y="651.1" width="32.0" height="4.6" fill="#d8d4c8" /><rect x="711.3" y="660.9" width="105.0" height="66.7" fill="#262d36" /><rect x="711.3" y="660.9" width="105.0" height="16.4" fill="#6a4a2e" opacity=".75"/><path d="M788.9 661.3 L816.3 661.3 L816.3 704.7 L795.8 704.7 Z" fill="#3a2a1e" opacity=".8"/><rect x="711.3" y="676.4" width="77.6" height="16.9" fill="#4a5a6a" opacity=".5"/></g></g><g clip-path="url(#c5p2)"><g filter="url(#b5)"><rect x="807.2" y="581.4" width="107.3" height="146.1" fill="#1f1b23" /><ellipse cx="850.6" cy="611.6" rx="42.2" ry="16.4" fill="#e6e4de" /><ellipse cx="850.6" cy="608.8" rx="34.2" ry="11.9" fill="#f4f2ec" /><ellipse cx="839.2" cy="607.7" rx="28.5" ry="12.6" fill="#9ccb48" /><ellipse cx="857.4" cy="611.1" rx="13.7" ry="8.2" fill="#b4d860" /><ellipse cx="836.9" cy="594.0" rx="9.1" ry="6.8" fill="#c23a2a" /><ellipse cx="850.6" cy="599.7" rx="6.8" ry="4.6" fill="#7a2230" /><ellipse cx="818.6" cy="591.7" rx="8.0" ry="8.0" fill="#2f6e2a" /><rect x="807.2" y="623.7" width="107.3" height="8.0" fill="#2a2428" /><rect x="807.2" y="630.5" width="107.3" height="97.0" fill="#d9c98a" /><ellipse cx="839.2" cy="645.4" rx="24.0" ry="17.1" fill="#d8b448" /><ellipse cx="834.6" cy="640.8" rx="13.7" ry="9.1" fill="#e6c860" /><ellipse cx="899.7" cy="646.5" rx="12.6" ry="16.0" fill="#e2d68c" /><ellipse cx="878.0" cy="649.9" rx="10.3" ry="10.3" fill="#3f8a2e" /><ellipse cx="875.7" cy="643.1" rx="5.0" ry="5.9" fill="#5aa83c" /><path d="M825.5 663.6 L862.0 659.1 L900.8 665.9 L908.8 681.9 L871.1 704.7 L825.5 700.2 Z" fill="#efe6c0" /><rect x="807.2" y="631.7" width="9.1" height="95.9" fill="#8a7a3a" opacity=".6"/></g></g><g clip-path="url(#c5p3)"><g filter="url(#b5)"><rect x="905.4" y="581.4" width="102.7" height="146.1" fill="#e9e9eb" /><rect x="905.4" y="581.4" width="57.1" height="57.1" fill="#f6f6f7" /><ellipse cx="939.6" cy="661.3" rx="34.2" ry="20.5" fill="#9a9aa2" /><ellipse cx="923.7" cy="681.9" rx="27.4" ry="16.0" fill="#5e5c64" /><rect x="961.3" y="607.7" width="50" height="98.2" rx="5" fill="#272b35"/><rect x="965.2" y="615.7" width="42.9" height="81.1" fill="#f0f0f2" /><rect x="965.2" y="615.7" width="42.9" height="11.9" fill="#d83a38" /><rect x="971.6" y="633.9" width="22.8" height="2.3" fill="#9a9aa0" /><rect x="971.6" y="639.0" width="18.3" height="2.3" fill="#9a9aa0" /><rect x="971.6" y="652.2" width="25.1" height="2.3" fill="#b4b4ba" /><ellipse cx="1000.1" cy="635.1" rx="2.3" ry="2.3" fill="#6a8a5a" /><ellipse cx="1000.1" cy="652.2" rx="2.3" ry="2.3" fill="#6a8a5a" /><path d="M955.6 654.5 L969.3 649.9 L976.2 668.2 L1008.1 661.3 L1008.1 693.3 L967.0 693.3 Z" fill="#6a544c" /><ellipse cx="985.3" cy="677.3" rx="18.3" ry="9.1" fill="#8a6e60" /></g></g><rect x="620" y="586.5" width="384" height="135.1" fill="url(#g5d)" /><rect x="715.7" y="586.5" width="0.6" height="135.1" fill="#000" opacity=".35"/><rect x="811.7" y="586.5" width="0.6" height="135.1" fill="#000" opacity=".35"/><rect x="908.3000000000001" y="586.5" width="0.6" height="135.1" fill="#000" opacity=".35"/><rect x="635" y="642" width="33" height="9.2" fill="#e2533c" /><text x="651.5" y="648.4" font-family="Liberation Sans, sans-serif" font-size="3.6" fill="#fff" text-anchor="middle" font-weight="bold" textLength="25" lengthAdjust="spacingAndGlyphs" >GENERAL NEWS</text><text x="635" y="664.3" font-family="Liberation Sans, sans-serif" font-size="8.6" fill="#fff" text-anchor="start" font-weight="bold" textLength="66" lengthAdjust="spacingAndGlyphs" >Speak Well and</text><text x="635" y="678.8" font-family="Liberation Sans, sans-serif" font-size="8.6" fill="#fff" text-anchor="start" font-weight="bold" textLength="58" lengthAdjust="spacingAndGlyphs" >Advance Your</text><text x="635" y="693.3" font-family="Liberation Sans, sans-serif" font-size="8.6" fill="#fff" text-anchor="start" font-weight="bold" textLength="28" lengthAdjust="spacingAndGlyphs" >Career</text><rect x="731" y="642" width="33" height="9.2" fill="#e2533c" /><text x="747.5" y="648.4" font-family="Liberation Sans, sans-serif" font-size="3.6" fill="#fff" text-anchor="middle" font-weight="bold" textLength="25" lengthAdjust="spacingAndGlyphs" >GENERAL NEWS</text><text x="731" y="664.3" font-family="Liberation Sans, sans-serif" font-size="8.6" fill="#fff" text-anchor="start" font-weight="bold" textLength="57" lengthAdjust="spacingAndGlyphs" >Top 10 Paved</text><text x="731" y="678.8" font-family="Liberation Sans, sans-serif" font-size="8.6" fill="#fff" text-anchor="start" font-weight="bold" textLength="54" lengthAdjust="spacingAndGlyphs" >Bike Trails In</text><text x="731" y="693.3" font-family="Liberation Sans, sans-serif" font-size="8.6" fill="#fff" text-anchor="start" font-weight="bold" textLength="30" lengthAdjust="spacingAndGlyphs" >Florida</text><rect x="827.5" y="642" width="33" height="9.2" fill="#e2533c" /><text x="844.0" y="648.4" font-family="Liberation Sans, sans-serif" font-size="3.6" fill="#fff" text-anchor="middle" font-weight="bold" textLength="25" lengthAdjust="spacingAndGlyphs" >GENERAL NEWS</text><text x="827.5" y="664.3" font-family="Liberation Sans, sans-serif" font-size="8.6" fill="#fff" text-anchor="start" font-weight="bold" textLength="48" lengthAdjust="spacingAndGlyphs" >12 Reasons</text><text x="827.5" y="678.8" font-family="Liberation Sans, sans-serif" font-size="8.6" fill="#fff" text-anchor="start" font-weight="bold" textLength="58" lengthAdjust="spacingAndGlyphs" >Why Butter Is</text><text x="827.5" y="693.3" font-family="Liberation Sans, sans-serif" font-size="8.6" fill="#fff" text-anchor="start" font-weight="bold" textLength="26" lengthAdjust="spacingAndGlyphs" >Better</text><rect x="923.5" y="642" width="33" height="9.2" fill="#e2533c" /><text x="940.0" y="648.4" font-family="Liberation Sans, sans-serif" font-size="3.6" fill="#fff" text-anchor="middle" font-weight="bold" textLength="25" lengthAdjust="spacingAndGlyphs" >GENERAL NEWS</text><text x="923.5" y="664.3" font-family="Liberation Sans, sans-serif" font-size="8.6" fill="#fff" text-anchor="start" font-weight="bold" textLength="21" lengthAdjust="spacingAndGlyphs" >Grab</text><text x="923.5" y="678.8" font-family="Liberation Sans, sans-serif" font-size="8.6" fill="#fff" text-anchor="start" font-weight="bold" textLength="63" lengthAdjust="spacingAndGlyphs" >Alternative For</text><text x="923.5" y="693.3" font-family="Liberation Sans, sans-serif" font-size="8.6" fill="#fff" text-anchor="start" font-weight="bold" textLength="65" lengthAdjust="spacingAndGlyphs" >Daily Commute</text><text x="641" y="734.6" font-family="Liberation Sans, sans-serif" font-size="3.8" fill="#111" text-anchor="start" font-weight="bold" textLength="39" lengthAdjust="spacingAndGlyphs" >TRENDING POSTS</text><rect x="640.8" y="739" width="108.5" height="116" fill="#fff" /><rect x="757.8" y="739" width="108.5" height="116" fill="#fff" /><rect x="875.7" y="739" width="108.5" height="116" fill="#fff" /><g clip-path="url(#c50)"><g filter="url(#b5)"><path d="M635.9 733.9 L755.2 733.9 L755.2 824.4 L635.9 824.4 Z" fill="#d6e4ec" /><path d="M635.9 733.9 L662.6 733.9 L652.3 760.6 L635.9 764.7 Z" fill="#dcc0a8" /><path d="M701.7 733.9 L755.2 733.9 L755.2 750.8 L701.7 748.3 Z" fill="#6caac8" /><path d="M703.8 738.8 L751.1 739.6 L751.1 740.5 L703.8 739.6 Z" fill="#dfeef4" opacity=".7"/><path d="M703.8 741.7 L751.1 742.5 L751.1 743.3 L703.8 742.5 Z" fill="#dfeef4" opacity=".7"/><path d="M703.8 744.6 L751.1 745.4 L751.1 746.2 L703.8 745.4 Z" fill="#dfeef4" opacity=".7"/><path d="M703.8 747.5 L751.1 748.3 L751.1 749.1 L703.8 748.3 Z" fill="#dfeef4" opacity=".7"/><path d="M650.3 742.1 L656.5 740.1 L755.2 764.7 L755.2 773.0 Z" fill="#a26c3c" /><path d="M652.3 805.9 L681.1 791.9 L708.9 803.8 L708.9 824.4 L648.2 824.4 Z" fill="#7c3d5d" /><path d="M660.6 771.9 L677.0 768.9 L688.3 785.3 L684.2 798.1 L668.8 798.1 Z" fill="#caa48c" /><path d="M659.5 763.7 L679.1 744.2 L712.0 768.9 L728.9 791.9 L700.1 802.2 L681.1 789.8 Z" fill="#2e3836" /><path d="M691.4 748.3 L709.9 745.8 L722.7 754.5 L718.2 764.7 L701.7 762.3 Z" fill="#e2c4ac" /><path d="M689.8 750.3 L701.7 749.5 L704.2 761.0 L693.9 762.7 Z" fill="#b47e4e" /><path d="M677.4 771.9 L687.7 770.5 L690.2 783.7 L680.3 786.1 Z" fill="#5c6c72" /><path d="M709.9 773.0 L726.4 775.4 L755.2 807.9 L755.2 824.4 L707.9 824.4 Z" fill="#2a2c34" /><path d="M635.9 785.7 L660.6 783.3 L669.2 798.1 L656.5 805.9 L635.9 810.0 Z" fill="#2c2e36" /><path d="M635.9 805.9 L656.5 805.9 L652.3 824.4 L635.9 824.4 Z" fill="#5a5a60" /><path d="M712.0 768.9 L726.4 764.7 L730.5 775.0 L722.3 779.1 Z" fill="#d8b8a0" /></g></g><g clip-path="url(#c51)"><g filter="url(#b5)"><path d="M753.1 733.9 L870.4 733.9 L870.4 824.4 L753.1 824.4 Z" fill="#2c2826" /><path d="M753.1 733.9 L784.0 733.9 L784.0 761.0 L753.1 762.7 Z" fill="#8c8c8a" /><path d="M781.9 733.9 L784.0 733.9 L784.0 779.1 L781.9 779.1 Z" fill="#c8c8c8" /><path d="M831.3 733.9 L837.9 733.9 L837.9 758.6 L831.3 758.6 Z" fill="#d8d8d8" /><path d="M753.1 773.0 L784.0 773.0 L784.0 797.7 L753.1 797.7 Z" fill="#6c6c6c" /><path d="M753.1 791.9 L870.4 791.9 L870.4 824.4 L753.1 824.4 Z" fill="#e4e4e6" /><path d="M829.3 761.0 L870.4 758.6 L870.4 799.7 L847.8 799.7 L829.3 775.0 Z" fill="#3c1c2c" /><path d="M847.8 779.1 L860.1 778.3 L864.2 799.7 L845.7 799.7 Z" fill="#4a2438" /><path d="M753.1 764.7 L771.7 763.1 L788.1 761.0 L792.2 771.9 L771.7 775.4 L753.1 777.1 Z" fill="#5a4030" /><path d="M784.0 759.4 L802.5 757.7 L807.0 768.9 L800.5 774.6 L786.5 773.4 Z" fill="#8c5c3c" /><path d="M808.7 733.9 L847.8 733.9 L833.4 758.6 L825.1 764.7 L814.9 758.6 Z" fill="#d8b090" /><path d="M804.6 756.9 L823.1 755.7 L827.6 766.8 L821.0 773.4 L807.0 772.1 Z" fill="#e2c2aa" /><path d="M824.3 748.3 L831.3 746.2 L833.4 760.2 L826.4 761.9 Z" fill="#1c1a1a" /><path d="M853.9 750.3 L870.4 742.1 L870.4 760.6 L858.1 758.6 Z" fill="#d8b090" /><path d="M786.5 779.1 L796.3 779.1 L796.8 812.5 L786.1 812.5 Z" fill="#1e1e1e" /><path d="M786.5 785.3 L796.3 781.6 L796.3 784.5 L786.5 788.2 Z" fill="#f0f0f0" /><path d="M786.5 791.1 L796.3 787.4 L796.3 790.3 L786.5 794.0 Z" fill="#f0f0f0" /><path d="M786.5 796.8 L796.3 793.1 L796.3 796.0 L786.5 799.7 Z" fill="#f0f0f0" /><path d="M786.5 802.6 L796.3 798.9 L796.3 801.8 L786.5 805.5 Z" fill="#f0f0f0" /><path d="M786.5 808.4 L796.3 804.7 L796.3 807.5 L786.5 811.2 Z" fill="#f0f0f0" /><path d="M788.5 775.4 L794.3 775.4 L794.7 779.6 L788.1 779.6 Z" fill="#d8e0e4" /><path d="M809.1 784.9 L825.1 784.9 L826.0 808.4 L808.3 808.4 Z" fill="#8a7c5e" /><path d="M809.1 784.9 L825.1 784.9 L825.1 789.0 L809.1 789.0 Z" fill="#c8c8c4" /><path d="M831.3 798.9 L856.0 797.7 L854.8 810.4 L833.4 811.2 Z" fill="#5c6c62" /><path d="M833.4 791.9 L843.7 789.4 L845.7 798.9 L835.4 799.7 Z" fill="#3a5a3a" /><path d="M794.3 805.1 L835.4 805.9 L835.4 824.4 L794.3 824.4 Z" fill="#3a3a38" /><ellipse cx="819.0" cy="810.4" rx="12.3" ry="4.9" fill="#2a2a28" /></g></g><g clip-path="url(#c52)"><g filter="url(#b5)"><path d="M870.4 733.9 L989.7 733.9 L989.7 824.4 L870.4 824.4 Z" fill="#a0703a" /><path d="M923.9 733.9 L989.7 733.9 L989.7 764.7 L923.9 762.7 Z" fill="#4e3418" /><path d="M870.4 733.9 L881.1 733.9 L881.1 779.1 L870.4 779.1 Z" fill="#8a5a2a" /><path d="M879.7 733.9 L926.4 733.9 L928.0 762.7 L915.7 777.1 L886.9 779.1 L878.6 762.7 Z" fill="#e8e8e8" /><path d="M899.2 733.9 L902.5 733.9 L909.5 758.6 L906.6 760.6 Z" fill="#3a342c" /><path d="M913.6 733.9 L916.5 733.9 L909.9 760.6 L907.4 759.4 Z" fill="#3a342c" /><path d="M886.9 773.0 L915.7 770.9 L930.1 783.7 L907.4 787.4 L888.9 783.3 Z" fill="#d6b294" /><path d="M928.0 758.6 L948.6 754.5 L954.8 777.1 L932.1 781.2 Z" fill="#e2ded6" /><path d="M944.5 775.0 L977.4 773.0 L979.4 797.7 L948.6 797.7 Z" fill="#c8d0d8" /><path d="M948.6 779.1 L960.9 778.3 L963.0 789.4 L950.6 790.7 Z" fill="#5a6a7a" /><path d="M969.2 742.1 L989.7 740.1 L989.7 781.2 L973.3 779.1 Z" fill="#2a3444" /><path d="M898.8 787.4 L926.4 784.1 L930.1 794.8 L902.5 798.9 Z" fill="#9aa0a4" /><path d="M907.4 799.7 L940.3 793.5 L948.6 805.9 L911.5 810.0 Z" fill="#6c4a22" /><ellipse cx="946.5" cy="748.3" rx="14.4" ry="7.4" fill="#4a8a3a" opacity=".85"/><ellipse cx="969.2" cy="764.7" rx="8.2" ry="12.3" fill="#3a7a2e" opacity=".8"/><ellipse cx="888.9" cy="799.7" rx="20.6" ry="20.6" fill="#2c6422" /><ellipse cx="882.7" cy="787.4" rx="10.3" ry="8.2" fill="#8aba5a" opacity=".7"/><ellipse cx="899.2" cy="812.1" rx="16.5" ry="8.2" fill="#1f4a1a" /><ellipse cx="938.3" cy="814.1" rx="32.9" ry="9.5" fill="#3a7a2a" /><ellipse cx="973.3" cy="807.9" rx="14.4" ry="12.3" fill="#c8d8b0" opacity=".8"/><ellipse cx="960.9" cy="799.7" rx="10.3" ry="6.2" fill="#4a8a34" opacity=".8"/></g></g><text x="649" y="828.6" font-family="Liberation Sans, sans-serif" font-size="3.4" fill="#d9513c" text-anchor="start" textLength="19" lengthAdjust="spacingAndGlyphs" >INTERNET</text><text x="649" y="836" font-family="Liberation Sans, sans-serif" font-size="5.2" fill="#111" text-anchor="start" font-weight="bold" textLength="86" lengthAdjust="spacingAndGlyphs" >Tips To Help You At Making Money</text><text x="649" y="844" font-family="Liberation Sans, sans-serif" font-size="5.2" fill="#111" text-anchor="start" font-weight="bold" textLength="32" lengthAdjust="spacingAndGlyphs" >Online Quick</text><text x="649" y="855.6" font-family="Liberation Sans, sans-serif" font-size="4.4" fill="#888" text-anchor="start" textLength="88" lengthAdjust="spacingAndGlyphs" >There are many variations of lorem ipsum</text><text x="766" y="828.6" font-family="Liberation Sans, sans-serif" font-size="3.4" fill="#d9513c" text-anchor="start" textLength="19" lengthAdjust="spacingAndGlyphs" >INTERNET</text><text x="766" y="836" font-family="Liberation Sans, sans-serif" font-size="5.2" fill="#111" text-anchor="start" font-weight="bold" textLength="82" lengthAdjust="spacingAndGlyphs" >Internet Marketing Solutions for</text><text x="766" y="844" font-family="Liberation Sans, sans-serif" font-size="5.2" fill="#111" text-anchor="start" font-weight="bold" textLength="44" lengthAdjust="spacingAndGlyphs" >Small Companies</text><text x="766" y="855.6" font-family="Liberation Sans, sans-serif" font-size="4.4" fill="#888" text-anchor="start" textLength="88" lengthAdjust="spacingAndGlyphs" >There are many variations of lorem ipsum</text><text x="883" y="828.6" font-family="Liberation Sans, sans-serif" font-size="3.4" fill="#d9513c" text-anchor="start" textLength="19" lengthAdjust="spacingAndGlyphs" >INTERNET</text><text x="883" y="836" font-family="Liberation Sans, sans-serif" font-size="5.2" fill="#111" text-anchor="start" font-weight="bold" textLength="85" lengthAdjust="spacingAndGlyphs" >These Mistakes Are Badly Hurting</text><text x="883" y="844" font-family="Liberation Sans, sans-serif" font-size="5.2" fill="#111" text-anchor="start" font-weight="bold" textLength="78" lengthAdjust="spacingAndGlyphs" >Your Online Business Directory</text><text x="883" y="855.6" font-family="Liberation Sans, sans-serif" font-size="4.4" fill="#888" text-anchor="start" textLength="88" lengthAdjust="spacingAndGlyphs" >There are many variations of lorem ipsum</text></svg></div></div>
<div class="name"><span class="t" style="left:15.50px;top:16.00px;font-size:15px;letter-spacing:0.049px;color:#2c3338;">Sidebar</span>
</div>
</div>
<div class="card" style="left:1056px;top:565px">
<div class="shot"><div class="abs" style="left:-1057px;top:-566px"><svg class="abs" style="left:1057px;top:566px;width:384px;height:288px" viewBox="1057 566 384 288" preserveAspectRatio="none"><defs><filter id="b6" x="-5%" y="-5%" width="110%" height="110%"><feGaussianBlur stdDeviation=".9"/></filter><clipPath id="c6"><rect x="1191" y="585.1" width="194" height="108.8"/></clipPath><clipPath id="c6b"><rect x="1191" y="791.2" width="194" height="63"/></clipPath></defs><rect x="1057" y="566" width="384" height="288" fill="#e6eaeb" /><text x="1111.4" y="603" font-family="Liberation Serif, serif" font-size="8.6" fill="#2f62a4" text-anchor="start" font-weight="bold" textLength="41" lengthAdjust="spacingAndGlyphs">Leento Free</text><text x="1111.4" y="609.8" font-family="Liberation Sans, sans-serif" font-size="3.4" fill="#7a8088" text-anchor="start" textLength="52" lengthAdjust="spacingAndGlyphs" >Clean &amp; modern WordPress blog theme</text><rect x="1118.8" y="620.200" width="7.600" height="7.600" fill="#eef2f4" stroke="#2f62a4" stroke-width=".7"/><rect x="1121.6" y="622.8" width="2" height="2.6" fill="#2f62a4" /><rect x="1130.1" y="620.200" width="7.600" height="7.600" fill="#eef2f4" stroke="#2f62a4" stroke-width=".7"/><rect x="1132.8999999999999" y="622.8" width="2" height="2.6" fill="#2f62a4" /><rect x="1141.3999999999999" y="620.200" width="7.600" height="7.600" fill="#eef2f4" stroke="#2f62a4" stroke-width=".7"/><rect x="1144.1999999999998" y="622.8" width="2" height="2.6" fill="#2f62a4" /><rect x="1152.7" y="620.200" width="7.600" height="7.600" fill="#eef2f4" stroke="#2f62a4" stroke-width=".7"/><rect x="1155.5" y="622.8" width="2" height="2.6" fill="#2f62a4" /><rect x="1164.0" y="620.200" width="7.600" height="7.600" fill="#eef2f4" stroke="#2f62a4" stroke-width=".7"/><rect x="1166.8" y="622.8" width="2" height="2.6" fill="#2f62a4" /><rect x="1113" y="644.6" width="2.4" height="2.8" fill="#2f62a4" /><text x="1118" y="647.6" font-family="Liberation Serif, serif" font-size="4.2" fill="#34588c" text-anchor="start" textLength="10" lengthAdjust="spacingAndGlyphs">Home</text><rect x="1111.5" y="651.2" width="67.5" height="0.4" fill="#d4dadd" /><rect x="1113" y="655.2" width="2.4" height="2.8" fill="#2f62a4" /><text x="1118" y="658.2" font-family="Liberation Serif, serif" font-size="4.2" fill="#34588c" text-anchor="start" textLength="22" lengthAdjust="spacingAndGlyphs">Sample Page</text><rect x="1111.5" y="661.8000000000001" width="67.5" height="0.4" fill="#d4dadd" /><rect x="1113" y="666.8" width="2.4" height="2.8" fill="#2f62a4" /><text x="1118" y="669.8" font-family="Liberation Serif, serif" font-size="4.2" fill="#34588c" text-anchor="start" textLength="38" lengthAdjust="spacingAndGlyphs">Download Leento Free</text><rect x="1111.5" y="673.4" width="67.5" height="0.4" fill="#d4dadd" /><rect x="1113" y="677.6" width="2.4" height="2.8" fill="#2f62a4" /><text x="1118" y="680.6" font-family="Liberation Serif, serif" font-size="4.2" fill="#34588c" text-anchor="start" textLength="20" lengthAdjust="spacingAndGlyphs">Pet Wonder</text><rect x="1111.5" y="684.2" width="67.5" height="0.4" fill="#d4dadd" /><circle cx="1113.5" cy="699.300" r="1.200" fill="#c4cacf"/><circle cx="1119.9" cy="699.300" r="1.200" fill="#c4cacf"/><circle cx="1126.3" cy="699.300" r="1.200" fill="#c4cacf"/><circle cx="1132.7" cy="699.300" r="1.200" fill="#c4cacf"/><circle cx="1139.1" cy="699.300" r="1.200" fill="#c4cacf"/><circle cx="1145.5" cy="699.300" r="1.200" fill="#c4cacf"/><circle cx="1151.9" cy="699.300" r="1.200" fill="#c4cacf"/><circle cx="1158.3" cy="699.300" r="1.200" fill="#c4cacf"/><circle cx="1164.7" cy="699.300" r="1.200" fill="#c4cacf"/><circle cx="1171.1" cy="699.300" r="1.200" fill="#c4cacf"/><circle cx="1177.5" cy="699.300" r="1.200" fill="#c4cacf"/><rect x="1111.5" y="713.5" width="45" height="8.5" fill="#fff" /><text x="1114" y="719.4" font-family="Liberation Sans, sans-serif" font-size="3.4" fill="#999" text-anchor="start" textLength="14" lengthAdjust="spacingAndGlyphs" >Search ...</text><rect x="1157.5" y="713.5" width="21.5" height="8.5" fill="#2f65a8" /><text x="1168.2" y="719.2" font-family="Liberation Sans, sans-serif" font-size="3" fill="#fff" text-anchor="middle" font-weight="bold" textLength="9" lengthAdjust="spacingAndGlyphs" >SEARCH</text><text x="1111.5" y="738.3" font-family="Liberation Serif, serif" font-size="5.4" fill="#2f62a4" text-anchor="start" font-weight="bold" textLength="23" lengthAdjust="spacingAndGlyphs">Calendar</text><rect x="1138" y="736.2" width="41" height="0.7" fill="#2f62a4" /><rect x="1111.7" y="745.1" width="67.3" height="7.8" fill="#2f65a8" /><text x="1145.3" y="750.4" font-family="Liberation Sans, sans-serif" font-size="3" fill="#fff" text-anchor="middle" font-weight="bold" textLength="16" lengthAdjust="spacingAndGlyphs" >MARCH 2018</text><rect x="1111.7" y="752.9" width="67.3" height="8.2" fill="#d3d7da" /><text x="1116.2" y="758.6" font-family="Liberation Sans, sans-serif" font-size="3.2" fill="#555" text-anchor="middle" font-weight="bold" >M</text><text x="1125.82" y="758.6" font-family="Liberation Sans, sans-serif" font-size="3.2" fill="#555" text-anchor="middle" font-weight="bold" >T</text><text x="1135.44" y="758.6" font-family="Liberation Sans, sans-serif" font-size="3.2" fill="#555" text-anchor="middle" font-weight="bold" >W</text><text x="1145.06" y="758.6" font-family="Liberation Sans, sans-serif" font-size="3.2" fill="#555" text-anchor="middle" font-weight="bold" >T</text><text x="1154.68" y="758.6" font-family="Liberation Sans, sans-serif" font-size="3.2" fill="#555" text-anchor="middle" font-weight="bold" >F</text><text x="1164.3" y="758.6" font-family="Liberation Sans, sans-serif" font-size="3.2" fill="#555" text-anchor="middle" font-weight="bold" >S</text><text x="1173.92" y="758.6" font-family="Liberation Sans, sans-serif" font-size="3.2" fill="#555" text-anchor="middle" font-weight="bold" >S</text><text x="1145.06" y="767.8" font-family="Liberation Sans, sans-serif" font-size="3.4" fill="#3c4c6c" text-anchor="middle" >1</text><text x="1154.68" y="767.8" font-family="Liberation Sans, sans-serif" font-size="3.4" fill="#3c4c6c" text-anchor="middle" >2</text><text x="1164.3" y="767.8" font-family="Liberation Sans, sans-serif" font-size="3.4" fill="#3c4c6c" text-anchor="middle" >3</text><text x="1173.92" y="767.8" font-family="Liberation Sans, sans-serif" font-size="3.4" fill="#3c4c6c" text-anchor="middle" >4</text><text x="1116.2" y="776.5" font-family="Liberation Sans, sans-serif" font-size="3.4" fill="#3c4c6c" text-anchor="middle" >5</text><text x="1125.82" y="776.5" font-family="Liberation Sans, sans-serif" font-size="3.4" fill="#3c4c6c" text-anchor="middle" >6</text><text x="1135.44" y="776.5" font-family="Liberation Sans, sans-serif" font-size="3.4" fill="#3c4c6c" text-anchor="middle" >7</text><text x="1145.06" y="776.5" font-family="Liberation Sans, sans-serif" font-size="3.4" fill="#3c4c6c" text-anchor="middle" >8</text><text x="1154.68" y="776.5" font-family="Liberation Sans, sans-serif" font-size="3.4" fill="#3c4c6c" text-anchor="middle" >9</text><text x="1164.3" y="776.5" font-family="Liberation Sans, sans-serif" font-size="3.4" fill="#3c4c6c" text-anchor="middle" >10</text><text x="1173.92" y="776.5" font-family="Liberation Sans, sans-serif" font-size="3.4" fill="#3c4c6c" text-anchor="middle" >11</text><text x="1116.2" y="785.1999999999999" font-family="Liberation Sans, sans-serif" font-size="3.4" fill="#3c4c6c" text-anchor="middle" >12</text><text x="1125.82" y="785.1999999999999" font-family="Liberation Sans, sans-serif" font-size="3.4" fill="#3c4c6c" text-anchor="middle" >13</text><text x="1135.44" y="785.1999999999999" font-family="Liberation Sans, sans-serif" font-size="3.4" fill="#3c4c6c" text-anchor="middle" >14</text><text x="1145.06" y="785.1999999999999" font-family="Liberation Sans, sans-serif" font-size="3.4" fill="#3c4c6c" text-anchor="middle" >15</text><text x="1154.68" y="785.1999999999999" font-family="Liberation Sans, sans-serif" font-size="3.4" fill="#3c4c6c" text-anchor="middle" >16</text><text x="1164.3" y="785.1999999999999" font-family="Liberation Sans, sans-serif" font-size="3.4" fill="#3c4c6c" text-anchor="middle" >17</text><text x="1173.92" y="785.1999999999999" font-family="Liberation Sans, sans-serif" font-size="3.4" fill="#3c4c6c" text-anchor="middle" >18</text><text x="1116.2" y="793.9" font-family="Liberation Sans, sans-serif" font-size="3.4" fill="#3c4c6c" text-anchor="middle" >19</text><text x="1125.82" y="793.9" font-family="Liberation Sans, sans-serif" font-size="3.4" fill="#3c4c6c" text-anchor="middle" >20</text><text x="1135.44" y="793.9" font-family="Liberation Sans, sans-serif" font-size="3.4" fill="#3c4c6c" text-anchor="middle" >21</text><text x="1145.06" y="793.9" font-family="Liberation Sans, sans-serif" font-size="3.4" fill="#3c4c6c" text-anchor="middle" >22</text><text x="1154.68" y="793.9" font-family="Liberation Sans, sans-serif" font-size="3.4" fill="#3c4c6c" text-anchor="middle" >23</text><text x="1164.3" y="793.9" font-family="Liberation Sans, sans-serif" font-size="3.4" fill="#3c4c6c" text-anchor="middle" >24</text><text x="1173.92" y="793.9" font-family="Liberation Sans, sans-serif" font-size="3.4" fill="#3c4c6c" text-anchor="middle" >25</text><text x="1116.2" y="802.5999999999999" font-family="Liberation Sans, sans-serif" font-size="3.4" fill="#3c4c6c" text-anchor="middle" >26</text><text x="1125.82" y="802.5999999999999" font-family="Liberation Sans, sans-serif" font-size="3.4" fill="#3c4c6c" text-anchor="middle" >27</text><text x="1135.44" y="802.5999999999999" font-family="Liberation Sans, sans-serif" font-size="3.4" fill="#3c4c6c" text-anchor="middle" >28</text><text x="1145.06" y="802.5999999999999" font-family="Liberation Sans, sans-serif" font-size="3.4" fill="#3c4c6c" text-anchor="middle" >29</text><text x="1154.68" y="802.5999999999999" font-family="Liberation Sans, sans-serif" font-size="3.4" fill="#3c4c6c" text-anchor="middle" >30</text><text x="1164.3" y="802.5999999999999" font-family="Liberation Sans, sans-serif" font-size="3.4" fill="#3c4c6c" text-anchor="middle" >31</text><rect x="1111.700" y="761.100" width="67.300" height="43.500" fill="none" stroke="#dde2e5" stroke-width=".5"/><rect x="1169.2" y="796.6" width="0.8" height="8.6" fill="#2f62a4" /><text x="1111.7" y="809.6" font-family="Liberation Sans, sans-serif" font-size="3.2" fill="#34588c" text-anchor="start" textLength="9" lengthAdjust="spacingAndGlyphs" >« Jan</text><text x="1111.5" y="826.9" font-family="Liberation Serif, serif" font-size="5.4" fill="#2f62a4" text-anchor="start" font-weight="bold" textLength="31.5" lengthAdjust="spacingAndGlyphs">Recent Posts</text><rect x="1146" y="824.8" width="33" height="0.7" fill="#8fb0d6" /><text x="1120.5" y="837.6" font-family="Liberation Serif, serif" font-size="3.8" fill="#34588c" text-anchor="start" textLength="51" lengthAdjust="spacingAndGlyphs">Welcome to Leento WordPress</text><text x="1116.5" y="843.6" font-family="Liberation Serif, serif" font-size="3.8" fill="#34588c" text-anchor="start" textLength="10.5" lengthAdjust="spacingAndGlyphs">Theme</text><rect x="1116" y="847.4" width="63" height="0.4" fill="#ccd3d8" /><text x="1120.5" y="853.6" font-family="Liberation Serif, serif" font-size="3.8" fill="#34588c" text-anchor="start" textLength="46" lengthAdjust="spacingAndGlyphs">Leento Theme Typography</text><g clip-path="url(#c6)"><g filter="url(#b6)"><path d="M1185.1 579.1 L1392.9 579.1 L1392.9 703.8 L1185.1 703.8 Z" fill="#a9bcc8" /><path d="M1236.1 656.3 L1255.1 656.3 L1255.1 703.8 L1236.1 703.8 Z" fill="#6c7c8a" /><path d="M1239.7 666.9 L1246.8 665.8 L1252.8 703.8 L1243.3 703.8 Z" fill="#39434f" /><path d="M1339.5 579.1 L1392.9 579.1 L1392.9 703.8 L1339.5 703.8 Z" fill="#d6cec3" /><path d="M1349.0 608.8 L1392.9 582.6 L1392.9 608.8 L1357.3 624.2 Z" fill="#c2b2a2" /><path d="M1345.4 620.6 L1369.1 612.3 L1392.9 651.5 L1392.9 675.3 Z" fill="#b59c88" /><path d="M1354.9 599.3 L1385.8 587.4 L1388.1 592.1 L1357.3 605.2 Z" fill="#9c8a7c" opacity=".7"/><path d="M1343.0 651.5 L1392.9 680.0 L1392.9 703.8 L1343.0 703.8 Z" fill="#b4c2ca" /><path d="M1354.9 661.0 L1365.6 656.3 L1357.3 691.9 L1350.1 691.9 Z" fill="#38424e" /><path d="M1185.1 579.1 L1234.9 579.1 L1238.5 703.8 L1185.1 703.8 Z" fill="#d0beb6" /><ellipse cx="1219.1" cy="665.9" rx="2.5" ry="3.6" fill="#4e3434" opacity=".78"/><ellipse cx="1192.3" cy="635.8" rx="2.7" ry="3.3" fill="#4e3434" opacity=".55"/><ellipse cx="1196.1" cy="636.1" rx="1.4" ry="1.6" fill="#4e3434" opacity=".81"/><ellipse cx="1202.3" cy="664.7" rx="1.7" ry="1.5" fill="#4e3434" opacity=".69"/><ellipse cx="1198.2" cy="671.9" rx="1.2" ry="1.4" fill="#4e3434" opacity=".53"/><ellipse cx="1197.0" cy="691.0" rx="1.0" ry="1.3" fill="#4e3434" opacity=".55"/><ellipse cx="1230.4" cy="616.5" rx="2.8" ry="3.1" fill="#4e3434" opacity=".85"/><ellipse cx="1200.2" cy="687.6" rx="2.3" ry="3.3" fill="#4e3434" opacity=".69"/><ellipse cx="1204.5" cy="624.4" rx="1.3" ry="1.0" fill="#4e3434" opacity=".49"/><ellipse cx="1206.0" cy="674.1" rx="2.1" ry="2.4" fill="#4e3434" opacity=".66"/><ellipse cx="1194.0" cy="623.7" rx="1.5" ry="1.9" fill="#4e3434" opacity=".56"/><ellipse cx="1212.7" cy="661.8" rx="1.1" ry="1.6" fill="#4e3434" opacity=".46"/><ellipse cx="1233.8" cy="624.0" rx="1.7" ry="2.0" fill="#4e3434" opacity=".71"/><ellipse cx="1207.5" cy="648.1" rx="1.0" ry="0.7" fill="#4e3434" opacity=".56"/><ellipse cx="1219.1" cy="689.1" rx="1.2" ry="1.1" fill="#4e3434" opacity=".74"/><ellipse cx="1206.5" cy="623.7" rx="1.9" ry="2.6" fill="#4e3434" opacity=".51"/><ellipse cx="1217.6" cy="670.1" rx="1.6" ry="1.5" fill="#4e3434" opacity=".72"/><ellipse cx="1233.7" cy="594.9" rx="1.6" ry="1.9" fill="#4e3434" opacity=".54"/><ellipse cx="1206.3" cy="685.8" rx="2.0" ry="1.9" fill="#4e3434" opacity=".65"/><ellipse cx="1204.8" cy="672.1" rx="2.1" ry="2.7" fill="#4e3434" opacity=".64"/><ellipse cx="1236.0" cy="602.6" rx="1.0" ry="1.6" fill="#4e3434" opacity=".79"/><ellipse cx="1232.7" cy="588.5" rx="2.4" ry="2.3" fill="#4e3434" opacity=".61"/><ellipse cx="1211.6" cy="631.0" rx="1.1" ry="1.5" fill="#4e3434" opacity=".47"/><ellipse cx="1227.2" cy="621.4" rx="1.3" ry="2.0" fill="#4e3434" opacity=".81"/><ellipse cx="1233.9" cy="653.7" rx="2.4" ry="1.9" fill="#4e3434" opacity=".72"/><ellipse cx="1207.8" cy="591.4" rx="1.7" ry="1.4" fill="#4e3434" opacity=".84"/><ellipse cx="1229.5" cy="691.4" rx="1.8" ry="2.0" fill="#4e3434" opacity=".65"/><ellipse cx="1212.6" cy="616.7" rx="1.7" ry="1.4" fill="#4e3434" opacity=".69"/><ellipse cx="1228.1" cy="643.0" rx="1.3" ry="1.9" fill="#4e3434" opacity=".66"/><ellipse cx="1199.1" cy="638.6" rx="1.9" ry="2.2" fill="#4e3434" opacity=".77"/><ellipse cx="1207.3" cy="670.7" rx="2.4" ry="3.0" fill="#4e3434" opacity=".47"/><ellipse cx="1225.3" cy="624.6" rx="2.3" ry="2.1" fill="#4e3434" opacity=".76"/><ellipse cx="1203.0" cy="691.9" rx="2.3" ry="3.4" fill="#4e3434" opacity=".66"/><ellipse cx="1220.3" cy="648.3" rx="1.0" ry="1.1" fill="#4e3434" opacity=".61"/><ellipse cx="1205.7" cy="614.8" rx="1.5" ry="1.6" fill="#4e3434" opacity=".67"/><ellipse cx="1206.7" cy="655.2" rx="2.4" ry="3.2" fill="#4e3434" opacity=".67"/><ellipse cx="1232.6" cy="603.8" rx="2.6" ry="2.8" fill="#4e3434" opacity=".68"/><ellipse cx="1234.2" cy="641.5" rx="2.0" ry="1.6" fill="#4e3434" opacity=".68"/><ellipse cx="1233.3" cy="637.0" rx="2.3" ry="2.9" fill="#4e3434" opacity=".71"/><ellipse cx="1198.8" cy="670.1" rx="2.1" ry="2.5" fill="#4e3434" opacity=".71"/><ellipse cx="1204.7" cy="645.3" rx="2.6" ry="2.4" fill="#4e3434" opacity=".46"/><ellipse cx="1199.8" cy="648.9" rx="2.1" ry="1.8" fill="#4e3434" opacity=".56"/><ellipse cx="1219.5" cy="589.6" rx="1.8" ry="1.6" fill="#4e3434" opacity=".48"/><ellipse cx="1231.2" cy="597.1" rx="2.8" ry="3.0" fill="#4e3434" opacity=".80"/><ellipse cx="1192.6" cy="635.7" rx="1.7" ry="2.0" fill="#4e3434" opacity=".82"/><ellipse cx="1200.2" cy="663.3" rx="1.7" ry="1.6" fill="#4e3434" opacity=".62"/><ellipse cx="1229.6" cy="679.5" rx="2.3" ry="2.6" fill="#4e3434" opacity=".47"/><ellipse cx="1215.8" cy="617.9" rx="1.5" ry="1.7" fill="#4e3434" opacity=".82"/><ellipse cx="1204.2" cy="623.3" rx="1.2" ry="1.2" fill="#4e3434" opacity=".81"/><ellipse cx="1220.0" cy="625.3" rx="1.2" ry="1.4" fill="#4e3434" opacity=".81"/><ellipse cx="1212.5" cy="606.7" rx="1.2" ry="0.9" fill="#4e3434" opacity=".45"/><ellipse cx="1208.2" cy="620.5" rx="2.7" ry="3.0" fill="#4e3434" opacity=".65"/><ellipse cx="1219.4" cy="682.2" rx="1.7" ry="1.7" fill="#4e3434" opacity=".59"/><ellipse cx="1213.3" cy="637.3" rx="2.3" ry="2.3" fill="#4e3434" opacity=".55"/><ellipse cx="1217.9" cy="613.3" rx="2.8" ry="3.1" fill="#4e3434" opacity=".71"/><ellipse cx="1191.9" cy="688.0" rx="1.5" ry="2.2" fill="#4e3434" opacity=".54"/><ellipse cx="1212.5" cy="598.3" rx="2.1" ry="2.2" fill="#4e3434" opacity=".63"/><ellipse cx="1192.8" cy="599.9" rx="1.7" ry="1.8" fill="#4e3434" opacity=".80"/><ellipse cx="1203.4" cy="687.0" rx="2.4" ry="2.2" fill="#4e3434" opacity=".62"/><ellipse cx="1229.1" cy="663.7" rx="1.5" ry="1.6" fill="#4e3434" opacity=".75"/><ellipse cx="1214.4" cy="679.1" rx="2.6" ry="3.7" fill="#4e3434" opacity=".46"/><ellipse cx="1225.3" cy="617.8" rx="2.0" ry="1.9" fill="#4e3434" opacity=".63"/><ellipse cx="1224.0" cy="587.9" rx="1.6" ry="2.0" fill="#4e3434" opacity=".82"/><ellipse cx="1197.0" cy="585.3" rx="2.0" ry="2.5" fill="#4e3434" opacity=".51"/><ellipse cx="1231.1" cy="644.5" rx="1.0" ry="1.3" fill="#4e3434" opacity=".72"/><ellipse cx="1217.8" cy="660.1" rx="2.8" ry="3.4" fill="#4e3434" opacity=".69"/><ellipse cx="1212.5" cy="659.4" rx="2.3" ry="3.3" fill="#4e3434" opacity=".74"/><ellipse cx="1228.5" cy="592.2" rx="2.5" ry="3.2" fill="#4e3434" opacity=".72"/><ellipse cx="1217.3" cy="655.7" rx="1.8" ry="1.8" fill="#4e3434" opacity=".55"/><ellipse cx="1212.6" cy="644.9" rx="1.9" ry="1.8" fill="#4e3434" opacity=".54"/><ellipse cx="1210.2" cy="644.0" rx="1.3" ry="1.3" fill="#ecdcd4" opacity=".6"/><ellipse cx="1224.1" cy="614.1" rx="1.4" ry="1.4" fill="#ecdcd4" opacity=".6"/><ellipse cx="1193.8" cy="687.7" rx="1.9" ry="1.9" fill="#ecdcd4" opacity=".6"/><ellipse cx="1210.4" cy="592.5" rx="2.1" ry="2.1" fill="#ecdcd4" opacity=".6"/><ellipse cx="1213.0" cy="598.5" rx="1.4" ry="1.4" fill="#ecdcd4" opacity=".6"/><ellipse cx="1218.7" cy="674.9" rx="1.4" ry="1.4" fill="#ecdcd4" opacity=".6"/><ellipse cx="1231.4" cy="693.4" rx="2.7" ry="2.7" fill="#ecdcd4" opacity=".6"/><ellipse cx="1210.8" cy="605.0" rx="1.6" ry="1.6" fill="#ecdcd4" opacity=".6"/><ellipse cx="1227.2" cy="592.3" rx="1.6" ry="1.6" fill="#ecdcd4" opacity=".6"/><ellipse cx="1216.1" cy="657.0" rx="2.8" ry="2.8" fill="#ecdcd4" opacity=".6"/><ellipse cx="1203.6" cy="647.3" rx="1.4" ry="1.4" fill="#ecdcd4" opacity=".6"/><ellipse cx="1209.0" cy="653.0" rx="1.2" ry="1.2" fill="#ecdcd4" opacity=".6"/><ellipse cx="1195.1" cy="659.7" rx="2.2" ry="2.2" fill="#ecdcd4" opacity=".6"/><ellipse cx="1206.9" cy="656.5" rx="3.1" ry="3.1" fill="#ecdcd4" opacity=".6"/><ellipse cx="1197.2" cy="617.1" rx="2.4" ry="2.4" fill="#ecdcd4" opacity=".6"/><ellipse cx="1221.6" cy="616.6" rx="3.2" ry="3.2" fill="#ecdcd4" opacity=".6"/><ellipse cx="1215.8" cy="609.1" rx="1.3" ry="1.3" fill="#ecdcd4" opacity=".6"/><ellipse cx="1201.6" cy="675.8" rx="1.8" ry="1.8" fill="#ecdcd4" opacity=".6"/><ellipse cx="1235.0" cy="673.1" rx="3.0" ry="3.0" fill="#ecdcd4" opacity=".6"/><ellipse cx="1211.5" cy="627.4" rx="1.5" ry="1.5" fill="#ecdcd4" opacity=".6"/><ellipse cx="1191.8" cy="622.2" rx="2.4" ry="2.4" fill="#ecdcd4" opacity=".6"/><ellipse cx="1192.6" cy="679.1" rx="2.3" ry="2.3" fill="#ecdcd4" opacity=".6"/><ellipse cx="1211.5" cy="627.5" rx="2.2" ry="2.2" fill="#ecdcd4" opacity=".6"/><ellipse cx="1234.5" cy="596.7" rx="2.3" ry="2.3" fill="#ecdcd4" opacity=".6"/><ellipse cx="1215.5" cy="626.9" rx="3.0" ry="3.0" fill="#ecdcd4" opacity=".6"/><ellipse cx="1233.6" cy="631.8" rx="2.9" ry="2.9" fill="#ecdcd4" opacity=".6"/><ellipse cx="1224.8" cy="594.1" rx="3.1" ry="3.1" fill="#ecdcd4" opacity=".6"/><ellipse cx="1213.2" cy="608.1" rx="2.7" ry="2.7" fill="#ecdcd4" opacity=".6"/><ellipse cx="1208.0" cy="676.1" rx="1.8" ry="1.8" fill="#ecdcd4" opacity=".6"/><ellipse cx="1233.0" cy="661.9" rx="2.9" ry="2.9" fill="#ecdcd4" opacity=".6"/><path d="M1246.8 703.8 L1244.4 675.3 L1250.4 651.5 L1264.6 634.9 L1327.6 634.9 L1340.6 651.5 L1345.4 703.8 Z" fill="#d9c5b5" /><path d="M1257.5 703.8 L1257.5 670.5 L1274.1 656.3 L1321.6 656.3 L1331.1 675.3 L1328.8 703.8 Z" fill="#d4a484" /><ellipse cx="1295.5" cy="675.3" rx="30.9" ry="10.7" fill="#c48c6c" opacity=".7"/><ellipse cx="1281.3" cy="691.9" rx="20.2" ry="9.5" fill="#ece4dc" /><path d="M1327.6 646.8 L1344.2 651.5 L1343.0 703.8 L1326.4 703.8 Z" fill="#e2d6ca" /><ellipse cx="1333.5" cy="691.9" rx="7.1" ry="4.8" fill="#3a3030" opacity=".5"/><ellipse cx="1257.5" cy="689.5" rx="5.9" ry="4.8" fill="#4a3434" opacity=".5"/><path d="M1264.6 601.6 L1265.8 582.6 L1283.6 582.6 L1286.0 592.1 Z" fill="#5e2e22" /><path d="M1316.9 594.5 L1324.0 582.6 L1350.1 582.6 L1340.6 615.9 Z" fill="#b25e32" /><path d="M1327.6 592.1 L1345.4 585.0 L1339.5 608.8 Z" fill="#4a2626" opacity=".8"/><ellipse cx="1297.9" cy="623.0" rx="47.5" ry="40.4" fill="#d2cbc5" /><ellipse cx="1297.9" cy="595.7" rx="15.4" ry="15.4" fill="#8c8c8e" opacity=".85"/><ellipse cx="1274.1" cy="599.3" rx="10.7" ry="10.7" fill="#b8b4b2" opacity=".8"/><ellipse cx="1321.6" cy="630.1" rx="14.3" ry="10.7" fill="#d9ab84" opacity=".85"/><ellipse cx="1274.1" cy="624.2" rx="8.3" ry="7.1" fill="#c8ac94" opacity=".6"/><ellipse cx="1294.3" cy="632.5" rx="14.3" ry="13.1" fill="#e6dcd4" opacity=".8"/><ellipse cx="1264.6" cy="651.5" rx="9.5" ry="11.9" fill="#6a6464" opacity=".6"/><ellipse cx="1281.3" cy="614.7" rx="6.9" ry="5.9" fill="#20262e" /><ellipse cx="1281.3" cy="614.7" rx="5.7" ry="5.0" fill="#6c9cc8" /><ellipse cx="1281.3" cy="614.7" rx="2.1" ry="3.6" fill="#141a22" /><ellipse cx="1313.3" cy="618.8" rx="8.3" ry="6.9" fill="#1c2028" /><ellipse cx="1313.3" cy="618.8" rx="6.9" ry="5.5" fill="#2f4f76" /><ellipse cx="1313.3" cy="618.8" rx="2.6" ry="3.8" fill="#10141a" /><ellipse cx="1293.4" cy="637.3" rx="6.2" ry="4.0" fill="#a65e52" /><ellipse cx="1293.4" cy="645.0" rx="3.6" ry="1.7" fill="#3a2624" /></g></g><rect x="1191" y="693.9" width="194" height="89.1" fill="#fff" /><rect x="1191" y="783" width="194" height="0.8" fill="#cfd8de" /><text x="1287.7" y="712.7" font-family="Liberation Serif, serif" font-size="6.8" fill="#444" text-anchor="middle" font-weight="bold" textLength="110" lengthAdjust="spacingAndGlyphs">Welcome to Leento WordPress Theme</text><text x="1286.5" y="725.4" font-family="Liberation Serif, serif" font-size="3.4" fill="#34588c" text-anchor="middle" textLength="45" lengthAdjust="spacingAndGlyphs">Tony   January 12, 2018</text><text x="1202" y="737.2" font-family="Liberation Serif, serif" font-size="3.7" fill="#555" text-anchor="start" textLength="157" lengthAdjust="spacingAndGlyphs">Lorem ipsum dolor sit amet, consectetur adipiscing elit. Nam aliquam, dolor sed dictum congue,</text><text x="1202" y="743.95" font-family="Liberation Serif, serif" font-size="3.7" fill="#555" text-anchor="start" textLength="158" lengthAdjust="spacingAndGlyphs">aliquam, turpis lacus laoreet elit, ut fermentum sapien est ac nunc. Curabitur et nulla sed tellus,</text><text x="1202" y="750.7" font-family="Liberation Serif, serif" font-size="3.7" fill="#555" text-anchor="start" textLength="167" lengthAdjust="spacingAndGlyphs">faucibus volutpat in eu, mollis ligula. Curabitur mattis. Quisque vel posuere elit. Nulla facilisi. Aenean</text><text x="1202" y="757.45" font-family="Liberation Serif, serif" font-size="3.7" fill="#555" text-anchor="start" textLength="156" lengthAdjust="spacingAndGlyphs">sollicitudin aliquet venenatis. Praesent ac, sollicitudin nulla. Maecenas efficitur laoreet purus sed...</text><text x="1202" y="769.8" font-family="Liberation Serif, serif" font-size="3.6" fill="#34588c" text-anchor="start" textLength="36" lengthAdjust="spacingAndGlyphs">Leave a Comment</text><text x="1373" y="769.8" font-family="Liberation Serif, serif" font-size="3.6" fill="#1f3f78" text-anchor="end" font-weight="bold" textLength="21" lengthAdjust="spacingAndGlyphs">Read More »</text><g clip-path="url(#c6b)"><g filter="url(#b6)"><path d="M1185.2 785.2 L1392.8 785.2 L1392.8 860.2 L1185.2 860.2 Z" fill="#1b2130" /><ellipse cx="1225.6" cy="793.9" rx="10.4" ry="4.6" fill="#a8a8ae" opacity=".8"/><ellipse cx="1335.2" cy="793.9" rx="21.9" ry="4.6" fill="#b4b4b8" opacity=".8"/><ellipse cx="1200.2" cy="795.6" rx="6.9" ry="3.5" fill="#6a6058" opacity=".7"/><path d="M1185.2 799.7 L1392.8 799.7 L1392.8 808.3 L1185.2 808.3 Z" fill="#3e4858" /><path d="M1282.1 814.1 L1291.3 814.1 L1291.3 833.7 L1282.1 833.7 Z" fill="#4a5468" opacity=".85"/><path d="M1295.0 814.1 L1304.3 814.1 L1304.3 833.7 L1295.0 833.7 Z" fill="#4a5468" opacity=".85"/><path d="M1308.0 814.1 L1317.2 814.1 L1317.2 833.7 L1308.0 833.7 Z" fill="#4a5468" opacity=".85"/><path d="M1320.9 814.1 L1330.1 814.1 L1330.1 833.7 L1320.9 833.7 Z" fill="#4a5468" opacity=".85"/><path d="M1333.8 814.1 L1343.0 814.1 L1343.0 833.7 L1333.8 833.7 Z" fill="#4a5468" opacity=".85"/><path d="M1346.7 814.1 L1355.9 814.1 L1355.9 833.7 L1346.7 833.7 Z" fill="#4a5468" opacity=".85"/><path d="M1359.6 814.1 L1368.9 814.1 L1368.9 833.7 L1359.6 833.7 Z" fill="#4a5468" opacity=".85"/><path d="M1372.5 814.1 L1381.8 814.1 L1381.8 833.7 L1372.5 833.7 Z" fill="#4a5468" opacity=".85"/><path d="M1385.5 814.1 L1394.7 814.1 L1394.7 833.7 L1385.5 833.7 Z" fill="#4a5468" opacity=".85"/><path d="M1194.5 815.2 L1203.7 815.2 L1203.7 831.4 L1194.5 831.4 Z" fill="#364052" opacity=".8"/><path d="M1207.4 815.2 L1216.6 815.2 L1216.6 831.4 L1207.4 831.4 Z" fill="#364052" opacity=".8"/><path d="M1220.3 815.2 L1229.5 815.2 L1229.5 831.4 L1220.3 831.4 Z" fill="#364052" opacity=".8"/><path d="M1185.2 833.7 L1392.8 833.7 L1392.8 840.0 L1185.2 840.0 Z" fill="#625a5a" /><path d="M1276.4 840.0 L1392.8 840.0 L1392.8 860.2 L1276.4 860.2 Z" fill="#b2b6ba" /><path d="M1276.4 840.0 L1392.8 840.0 L1392.8 845.2 L1276.4 845.2 Z" fill="#8a8e94" opacity=".7"/><ellipse cx="1353.6" cy="851.0" rx="11.5" ry="4.6" fill="#2c3c32" opacity=".85"/><path d="M1185.2 831.4 L1203.7 831.4 L1203.7 860.2 L1185.2 860.2 Z" fill="#c4c4c8" /><path d="M1199.1 860.2 L1207.1 837.1 L1219.8 829.1 L1237.1 825.6 L1245.2 839.4 L1246.4 860.2 Z" fill="#8a2f27" /><path d="M1204.8 860.2 L1208.3 835.4 L1210.6 835.4 L1207.1 860.2 Z" fill="#2c1412" opacity=".7"/><path d="M1210.6 860.2 L1213.5 833.7 L1215.8 833.7 L1212.9 860.2 Z" fill="#2c1412" opacity=".7"/><path d="M1216.4 860.2 L1218.7 831.9 L1221.0 831.9 L1218.7 860.2 Z" fill="#2c1412" opacity=".7"/><path d="M1222.1 860.2 L1223.9 830.2 L1226.2 830.2 L1224.4 860.2 Z" fill="#2c1412" opacity=".7"/><path d="M1227.9 860.2 L1229.1 831.9 L1231.4 831.9 L1230.2 860.2 Z" fill="#2c1412" opacity=".7"/><path d="M1233.7 860.2 L1234.3 833.7 L1236.6 833.7 L1236.0 860.2 Z" fill="#2c1412" opacity=".7"/><path d="M1239.4 860.2 L1239.4 835.4 L1241.7 835.4 L1241.7 860.2 Z" fill="#2c1412" opacity=".7"/><path d="M1201.4 837.1 L1245.2 833.7 L1245.2 836.0 L1201.4 839.4 Z" fill="#2c1412" opacity=".5"/><path d="M1201.4 842.9 L1245.2 839.4 L1245.2 841.7 L1201.4 845.2 Z" fill="#2c1412" opacity=".5"/><path d="M1201.4 848.7 L1245.2 845.2 L1245.2 847.5 L1201.4 851.0 Z" fill="#2c1412" opacity=".5"/><path d="M1201.4 854.4 L1245.2 851.0 L1245.2 853.3 L1201.4 856.7 Z" fill="#2c1412" opacity=".5"/><ellipse cx="1259.1" cy="817.0" rx="17.3" ry="22.5" fill="#b8927c" /><path d="M1234.8 815.2 L1236.6 795.6 L1251.0 789.8 L1271.7 789.8 L1275.8 799.1 L1261.4 797.3 L1247.5 804.8 L1242.3 817.5 Z" fill="#2a1f1a" /><path d="M1236.6 821.0 L1246.4 829.1 L1255.6 826.8 L1276.4 829.1 L1279.2 851.0 L1271.7 860.2 L1241.7 860.2 L1236.6 837.1 Z" fill="#6a4430" /><path d="M1260.2 829.1 L1271.7 830.2 L1271.7 834.8 L1262.5 833.9 Z" fill="#4a2e22" opacity=".8"/><path d="M1240.6 812.9 L1255.6 814.6 L1280.4 813.5 L1279.8 824.4 L1270.6 826.2 L1257.9 825.6 L1253.9 818.7 L1240.6 815.8 Z" fill="#0c0c10" /></g></g></svg></div></div>
<div class="name"><span class="t" style="left:15.50px;top:16.00px;font-size:15px;letter-spacing:0.024px;color:#2c3338;">Leento</span>
</div>
</div>
<div class="card" style="left:1493px;top:565px">
<div class="shot"><div class="abs" style="left:-1494px;top:-566px"><svg class="abs" style="left:1494px;top:566px;width:384px;height:288px" viewBox="1494 566 384 288" preserveAspectRatio="none"><defs><filter id="b7" x="-5%" y="-5%" width="110%" height="110%"><feGaussianBlur stdDeviation="1.3"/></filter><linearGradient id="g7l" x1="0" y1="0" x2="0" y2="1"><stop offset="0" stop-color="#72726c"/><stop offset=".45" stop-color="#5c5c58"/><stop offset="1" stop-color="#444442"/></linearGradient><clipPath id="c7"><rect x="1494" y="566" width="200" height="163.800"/></clipPath></defs><rect x="1494" y="566" width="384" height="288" fill="#fff" /><g clip-path="url(#c7)"><g filter="url(#b7)"><path d="M1486.9 558.9 L1690.6 558.9 L1690.6 737.6 L1486.9 737.6 Z" fill="#0a0a0a" /><path d="M1486.9 558.9 L1510.1 558.9 L1510.1 603.5 L1486.9 603.5 Z" fill="#6a5a4c" /><path d="M1486.9 601.7 L1510.1 601.7 L1510.1 648.2 L1486.9 648.2 Z" fill="#373737" /><path d="M1486.9 644.6 L1510.1 644.6 L1510.1 694.7 L1486.9 694.7 Z" fill="#5a4c40" /><path d="M1486.9 691.1 L1510.1 691.1 L1510.1 737.6 L1486.9 737.6 Z" fill="#2a2622" /><ellipse cx="1625.3" cy="619.6" rx="23.2" ry="17.0" fill="#7d6c5b" /><ellipse cx="1622.7" cy="616.0" rx="14.3" ry="9.8" fill="#93806c" opacity=".8"/><path d="M1603.0 604.4 L1647.7 604.4 L1649.5 625.0 L1619.1 641.1 L1608.4 625.0 Z" fill="#6e5f50" opacity=".6"/><path d="M1625.3 667.9 L1635.2 666.1 L1637.9 685.7 L1629.8 689.3 Z" fill="#c9c9cd" /><path d="M1633.4 641.1 L1690.6 633.9 L1690.6 683.9 L1637.0 689.3 Z" fill="#0e0f12" /><ellipse cx="1669.1" cy="655.3" rx="15.2" ry="9.8" fill="#a88a78" /><ellipse cx="1658.4" cy="658.9" rx="8.9" ry="7.1" fill="#7a6456" /><path d="M1572.6 600.8 L1598.5 600.8 L1601.2 603.5 L1638.7 709.0 L1633.4 737.6 L1572.6 737.6 Z" fill="#2b2d2f" /><path d="M1598.5 600.8 L1601.2 601.7 L1640.2 709.0 L1637.0 710.0 Z" fill="#9c9c9c" /><path d="M1637.0 691.1 L1690.6 681.3 L1690.6 702.7 L1640.9 710.4 Z" fill="#8c8c8e" /><path d="M1639.6 693.8 L1674.5 689.3 L1678.1 699.1 L1643.2 704.5 Z" fill="#2a2a2c" /><path d="M1640.9 710.4 L1690.6 702.7 L1690.6 707.2 L1641.6 713.6 Z" fill="#55555a" /><path d="M1642.3 716.1 L1690.6 709.0 L1690.6 737.6 L1645.9 737.6 Z" fill="#1c1c1f" /><rect x="1507.4" y="584.8" width="65.2" height="170" rx="4" fill="url(#g7l)"/><rect x="1507.4" y="584.8" width="6" height="170" rx="3" fill="#85857f" opacity=".8"/></g><rect x="1494" y="624" width="6.5" height="20" fill="#242424" /><path d="M1498.200 631.500 L1496 634 L1498.200 636.500" stroke="#fff" stroke-width=".7" fill="none"/></g><path d="M1529 568.500 l4.600 2.600 v5.300 l-4.600 2.600 l-4.600 -2.600 v-5.300 z" fill="none" stroke="#1e90d0" stroke-width="1"/><text x="1526.3" y="575.4" font-family="Liberation Sans, sans-serif" font-size="3.6" fill="#1e90d0" text-anchor="start" font-weight="bold" textLength="5.4" lengthAdjust="spacingAndGlyphs" >&lt;/&gt;</text><text x="1536" y="571.6" font-family="Liberation Sans, sans-serif" font-size="4" fill="#1e90d0" text-anchor="start" textLength="8" lengthAdjust="spacingAndGlyphs" >Web</text><text x="1536" y="579" font-family="Liberation Sans, sans-serif" font-size="6.2" fill="#1e90d0" text-anchor="start" textLength="39" lengthAdjust="spacingAndGlyphs" >Developement</text><text x="1581.2" y="636.9" font-family="Liberation Sans, sans-serif" font-size="16.5" fill="#fff" text-anchor="start" textLength="206.5" lengthAdjust="spacingAndGlyphs" >Web Design &amp; Development</text><text x="1585.5" y="647.8" font-family="Liberation Sans, sans-serif" font-size="4.8" fill="#fff" text-anchor="start" font-style="italic" textLength="128" lengthAdjust="spacingAndGlyphs" >Lorem ipsum dolor sit amet, consectetur adipiscing elit sed</text><text x="1673" y="655" font-family="Liberation Sans, sans-serif" font-size="4.8" fill="#fff" text-anchor="start" font-style="italic" textLength="10" lengthAdjust="spacingAndGlyphs" >diam</text><rect x="1669.400" y="661.900" width="40" height="10.700" rx="5.300" fill="none" stroke="#fff" stroke-width=".8"/><text x="1673.5" y="669.2" font-family="Liberation Sans, sans-serif" font-size="5" fill="#fff" text-anchor="start" font-weight="bold" textLength="24" lengthAdjust="spacingAndGlyphs" >Read More</text><text x="1648.8" y="760.5" font-family="Liberation Sans, sans-serif" font-size="10.6" fill="#222" text-anchor="start" font-weight="bold" textLength="80" lengthAdjust="spacingAndGlyphs" >OUR SERVICES</text><text x="1570" y="774.5" font-family="Liberation Sans, sans-serif" font-size="3.4" fill="#555" text-anchor="start" textLength="140" lengthAdjust="spacingAndGlyphs" >Lorem ipsum is simply dummy text of the printing and typesetting industry</text><rect x="1522.6" y="787.800" width="103.700" height="41.400" rx="1.500" fill="#fff" stroke="#eeeeee" stroke-width="1"/><rect x="1636" y="787.800" width="103.700" height="41.400" rx="1.500" fill="#fff" stroke="#eeeeee" stroke-width="1"/><path d="M1530.500 796.500 h6.500 l2.500 2.500 v8.500 h-9 z" fill="none" stroke="#3a9ab0" stroke-width=".9"/><text x="1532" y="805.5" font-family="Liberation Sans, sans-serif" font-size="3.6" fill="#3a9ab0" text-anchor="start" font-weight="bold" textLength="5.6" lengthAdjust="spacingAndGlyphs" >&lt;/&gt;</text><text x="1548" y="801.6" font-family="Liberation Sans, sans-serif" font-size="4.8" fill="#222" text-anchor="start" textLength="42" lengthAdjust="spacingAndGlyphs" >Web Development</text><text x="1548" y="809.0" font-family="Liberation Sans, sans-serif" font-size="3.5" fill="#444" text-anchor="start" textLength="64" lengthAdjust="spacingAndGlyphs" >Lorem Ipsum is simply dummy text of</text><text x="1548" y="814.8" font-family="Liberation Sans, sans-serif" font-size="3.5" fill="#444" text-anchor="start" textLength="64" lengthAdjust="spacingAndGlyphs" >the printing and typesetting industry.</text><text x="1548" y="820.6" font-family="Liberation Sans, sans-serif" font-size="3.5" fill="#444" text-anchor="start" textLength="61" lengthAdjust="spacingAndGlyphs" >Lorem Ipsum has been the industry</text><path d="M1642 806.500 l1.200 -3 l7 -6.500 l2 2 l-7 6.500 z" fill="#3a9ad0"/><text x="1659" y="801.6" font-family="Liberation Sans, sans-serif" font-size="4.8" fill="#222" text-anchor="start" textLength="35" lengthAdjust="spacingAndGlyphs" >Web Designing</text><text x="1659" y="809.0" font-family="Liberation Sans, sans-serif" font-size="3.5" fill="#444" text-anchor="start" textLength="64" lengthAdjust="spacingAndGlyphs" >Lorem Ipsum is simply dummy text of</text><text x="1659" y="814.8" font-family="Liberation Sans, sans-serif" font-size="3.5" fill="#444" text-anchor="start" textLength="64" lengthAdjust="spacingAndGlyphs" >the printing and typesetting industry.</text><text x="1659" y="820.6" font-family="Liberation Sans, sans-serif" font-size="3.5" fill="#444" text-anchor="start" textLength="61" lengthAdjust="spacingAndGlyphs" >Lorem Ipsum has been the industry</text></svg></div></div>
<div class="name"><span class="t" style="left:15.50px;top:16.00px;font-size:15px;letter-spacing:0.270px;color:#2c3338;">Web Development</span>
</div>
</div>
<svg class="abs" style="left:1410px;top:825px;width:272px;height:93px" viewBox="1410 825 272 93"><path d="M1427.7 884.3 L1430.2 903.5 L1500.1 906.1 L1499.1 900.0 L1433.2 897.4 Z" fill="#7fb1f8" /><path d="M1444.4 904.5 L1440.3 914.2 L1441.8 919.2 L1489.0 919.2 L1488.5 916.7 L1462.6 916.0 L1459.6 912.9 L1461.8 905.5 Z" fill="#7fb1f8" /><path d="M1474.3 845.3 L1496.1 850.8 L1510.2 905.5 L1499.1 906.1 L1495.0 900.0 L1485.9 855.4 Z" fill="#a4d916" /><path d="M1422.1 833.3 L1495.0 851.5 L1504.2 901.8 L1432.4 898.2 Z" fill="#14181f" /><path d="M1422.1 833.3 L1425.1 834.1 L1433.2 898.2 L1430.2 895.9 L1428.4 884.3 Z" fill="#5a5c62" /><path d="M1422.1 833.3 L1474.8 845.8 L1475.4 847.5 L1424.9 835.1 Z" fill="#3a3e46" /><path d="M1425.1 835.1 L1448.4 841.0 L1448.9 845.8 L1425.9 840.2 Z" fill="#28364f" /><path d="M1434.3 838.7 L1445.4 841.4 L1445.7 843.7 L1434.6 841.0 Z" fill="#9ab82a" /><path d="M1425.1 840.2 L1494.0 857.2 L1503.3 900.8 L1433.2 897.4 Z" fill="#18202c" /><path d="M1435.8 854.4 L1479.8 865.0 L1484.9 887.3 L1439.8 877.7 Z" fill="#212a38" /><path d="M1435.3 846.3 L1457.6 851.5 L1458.0 853.6 L1435.6 848.3 Z" fill="#c8d0da" opacity=".8"/><path d="M1438.8 855.4 L1452.0 858.4 L1452.2 859.9 L1439.0 856.8 Z" fill="#aeb8c6" opacity=".85"/><path d="M1452.2 858.2 L1454.2 858.7 L1454.4 860.7 L1452.4 860.2 Z" fill="#f0509a" /><path d="M1437.0 854.8 L1437.8 855.0 L1438.2 858.0 L1437.4 857.8 Z" fill="#2a8ad0" opacity=".8"/><path d="M1439.2 861.7 L1452.4 864.7 L1452.6 866.1 L1439.4 863.1 Z" fill="#aeb8c6" opacity=".85"/><path d="M1452.6 864.5 L1454.6 865.0 L1454.8 866.9 L1452.8 866.4 Z" fill="#f0509a" /><path d="M1437.4 861.1 L1438.2 861.3 L1438.6 864.3 L1437.8 864.1 Z" fill="#2a8ad0" opacity=".8"/><path d="M1439.6 868.1 L1452.8 871.1 L1453.0 872.5 L1439.8 869.5 Z" fill="#aeb8c6" opacity=".85"/><path d="M1437.8 867.5 L1438.6 867.7 L1439.0 870.7 L1438.2 870.5 Z" fill="#2a8ad0" opacity=".8"/><path d="M1440.0 873.6 L1453.2 876.7 L1453.4 878.1 L1440.2 875.1 Z" fill="#aeb8c6" opacity=".85"/><path d="M1438.2 873.0 L1439.0 873.2 L1439.4 876.3 L1438.6 876.1 Z" fill="#2a8ad0" opacity=".8"/><path d="M1440.4 880.5 L1453.6 883.6 L1453.8 885.0 L1440.6 881.9 Z" fill="#aeb8c6" opacity=".85"/><path d="M1453.8 883.4 L1455.8 883.9 L1456.0 885.8 L1454.0 885.3 Z" fill="#f0509a" /><path d="M1438.6 879.9 L1439.4 880.1 L1439.8 883.2 L1439.0 883.0 Z" fill="#2a8ad0" opacity=".8"/><path d="M1468.2 860.7 L1473.8 862.0 L1474.1 863.7 L1468.5 862.4 Z" fill="#d8c23a" /><path d="M1470.5 866.5 L1474.8 867.6 L1475.1 869.2 L1470.8 868.2 Z" fill="#e03030" /><path d="M1473.3 882.8 L1477.8 883.8 L1478.1 885.6 L1473.6 884.6 Z" fill="#e8c020" /><path d="M1474.8 863.5 L1478.8 864.5 L1479.0 865.7 L1475.0 864.7 Z" fill="#1fa6a0" /><path d="M1480.9 884.3 L1484.9 885.2 L1485.1 886.4 L1481.1 885.5 Z" fill="#1fa6a0" /><path d="M1481.9 860.0 L1485.9 861.0 L1486.1 862.2 L1482.1 861.2 Z" fill="#1fa6a0" opacity=".85"/><path d="M1482.4 862.5 L1490.2 863.5 L1490.4 864.7 L1482.6 863.7 Z" fill="#1fa6a0" opacity=".85"/><path d="M1482.9 865.0 L1488.4 866.0 L1488.6 867.2 L1483.1 866.2 Z" fill="#1fa6a0" opacity=".85"/><path d="M1483.4 867.6 L1492.6 868.6 L1492.8 869.8 L1483.6 868.8 Z" fill="#1fa6a0" opacity=".85"/><path d="M1483.9 870.1 L1490.8 871.1 L1491.0 872.3 L1484.1 871.3 Z" fill="#1fa6a0" opacity=".85"/><path d="M1484.4 872.6 L1489.0 873.6 L1489.2 874.8 L1484.6 873.8 Z" fill="#1fa6a0" opacity=".85"/><path d="M1484.9 875.2 L1493.2 876.2 L1493.4 877.4 L1485.1 876.4 Z" fill="#1fa6a0" opacity=".85"/><path d="M1485.4 877.7 L1491.4 878.7 L1491.6 879.9 L1485.6 878.9 Z" fill="#1fa6a0" opacity=".85"/><path d="M1485.9 880.2 L1495.6 881.2 L1495.9 882.4 L1486.1 881.4 Z" fill="#1fa6a0" opacity=".85"/><path d="M1486.4 882.8 L1493.8 883.8 L1494.0 885.0 L1486.6 884.0 Z" fill="#1fa6a0" opacity=".85"/><path d="M1486.9 885.3 L1492.0 886.3 L1492.2 887.5 L1487.1 886.5 Z" fill="#1fa6a0" opacity=".85"/><path d="M1487.4 887.8 L1496.3 888.8 L1496.5 890.0 L1487.6 889.0 Z" fill="#1fa6a0" opacity=".85"/><path d="M1483.4 865.0 L1485.9 865.6 L1486.1 866.7 L1483.6 866.1 Z" fill="#e08020" /><path d="M1484.9 870.1 L1487.9 870.8 L1488.2 871.9 L1485.1 871.2 Z" fill="#e08020" /><path d="M1484.9 874.1 L1487.1 874.6 L1487.3 875.7 L1485.1 875.2 Z" fill="#e08020" /><path d="M1480.3 854.4 L1486.9 856.0 L1487.1 857.4 L1480.6 855.8 Z" fill="#c8d0da" opacity=".7"/><path d="M1440.3 887.0 L1450.5 889.2 L1450.7 890.9 L1440.5 888.6 Z" fill="#dfe5ec" /><path d="M1489.5 895.9 L1499.6 897.1 L1499.9 898.8 L1489.8 897.5 Z" fill="#aeb8c6" opacity=".7"/><path d="M1440.8 895.9 L1487.9 899.0 L1488.2 900.5 L1441.1 898.2 Z" fill="#202a3a" /><path d="M1476.3 899.8 L1480.9 900.1 L1481.0 901.0 L1476.4 900.7 Z" fill="#2030c8" /><path d="M1490.0 900.2 L1493.5 900.4 L1493.6 901.2 L1490.1 901.0 Z" fill="#1fa6a0" /><path d="M1494.0 900.4 L1500.1 900.8 L1500.2 901.6 L1494.1 901.2 Z" fill="#c87020" /><text x="1510" y="882" font-family="Liberation Sans, sans-serif" font-size="22" font-weight="bold" fill="#fff" fill-opacity=".92" textLength="68" lengthAdjust="spacingAndGlyphs">ESSO</text><text x="1640" y="882" font-family="Liberation Sans, sans-serif" font-size="22" font-weight="bold" fill="#fff" fill-opacity=".92" textLength="64" lengthAdjust="spacingAndGlyphs">APPS</text><text x="1581" y="882" font-family="Liberation Sans, sans-serif" font-size="22" font-weight="bold" font-style="italic" fill="#8fd010" textLength="29" lengthAdjust="spacingAndGlyphs">4K</text><text x="1556" y="893.500" font-family="Liberation Sans, sans-serif" font-size="7" fill="#fff" fill-opacity=".9" textLength="76" lengthAdjust="spacingAndGlyphs">www.esso4k-tv.com</text></svg>
</div>
<div id="side">
<div class="abs" style="left:0;top:315px;width:160px;height:34px;background:#2271b1"></div>
<div class="abs" style="left:144px;top:324px;width:0;height:0;border:8px solid transparent;border-right-color:#f0f0f1"></div>
<div class="abs" style="left:0;top:349px;width:160px;height:183px;background:#2c3338"></div>
<svg class="ic" style="top:51px" viewBox="0 0 20 20"><path fill-rule="evenodd" d="M3.760 16h12.480c1.100-1.370 1.760-3.110 1.760-5 0-4.420-3.580-8-8-8s-8 3.580-8 8c0 1.890.660 3.630 1.760 5zM10 4c.550 0 1 .450 1 1s-.450 1-1 1-1-.450-1-1 .450-1 1-1zM6 6c.550 0 1 .450 1 1s-.450 1-1 1-1-.450-1-1 .450-1 1-1zm8 0c.550 0 1 .450 1 1s-.450 1-1 1-1-.450-1-1 .450-1 1-1zm-5.370 5.550L12 7v6c0 1.100-.900 2-2 2s-2-.900-2-2c0-.570.240-1.080.630-1.450zM4 10c.550 0 1 .450 1 1s-.450 1-1 1-1-.450-1-1 .450-1 1-1zm12 0c.550 0 1 .450 1 1s-.450 1-1 1-1-.450-1-1 .450-1 1-1zm-5 3c0-.550-.450-1-1-1s-1 .450-1 1 .450 1 1 1 1-.450 1-1z"/></svg><span class="t" style="left:36.20px;top:54.15px;font-size:14px;letter-spacing:-0.186px;">Dashboard</span>
<svg class="ic" style="top:96px" viewBox="0 0 20 20"><path fill-rule="evenodd" d="M10.440 3.020l1.820-1.820 6.360 6.350-1.830 1.820c-1.050-.680-2.480-.570-3.410.360l-.750.750c-.920.930-1.040 2.350-.350 3.410l-1.830 1.820-2.410-2.410-2.800 2.790c-.420.420-3.380 2.710-3.800 2.290s1.860-3.390 2.280-3.810l2.790-2.790L4.100 9.360l1.830-1.820c1.050.690 2.480.570 3.400-.360l.750-.750c.930-.920 1.050-2.350.360-3.410z"/></svg><span class="t" style="left:36.20px;top:99.15px;font-size:14px;transform:scaleX(0.9196);transform-origin:0 0;">Posts</span>
<svg class="ic" style="top:130px" viewBox="0 0 20 20"><path fill-rule="evenodd" d="M13 11V4c0-.550-.450-1-1-1h-1.670L9 1H5L3.670 3H2c-.550 0-1 .450-1 1v7c0 .550.450 1 1 1h10c.550 0 1-.450 1-1zM7 4.500c1.380 0 2.500 1.120 2.500 2.500S8.380 9.500 7 9.500 4.500 8.380 4.500 7 5.620 4.500 7 4.500zM14 6h5v10.500c0 1.380-1.120 2.500-2.500 2.500S14 17.880 14 16.500s1.120-2.500 2.500-2.500c.170 0 .340.020.500.050V9h-3V6zm-4 8.050V13h2v3.500c0 1.380-1.120 2.500-2.500 2.500S7 17.880 7 16.500 8.120 14 9.500 14c.170 0 .340.020.500.050z"/></svg><span class="t" style="left:36.20px;top:133.15px;font-size:14px;letter-spacing:-0.108px;">Media</span>
<svg class="ic" style="top:164px" viewBox="0 0 20 20"><path fill-rule="evenodd" d="M6 15V2h10v13H6zm-1 1h8v2H3V5h2v11z"/></svg><span class="t" style="left:36.20px;top:167.15px;font-size:14px;transform:scaleX(0.8993);transform-origin:0 0;">Pages</span>
<svg class="ic" style="top:198px" viewBox="0 0 20 20"><path fill-rule="evenodd" d="M5 2h9c1.100 0 2 .900 2 2v7c0 1.100-.900 2-2 2h-2l-5 5v-5H5c-1.100 0-2-.900-2-2V4c0-1.100.900-2 2-2z"/></svg><span class="t" style="left:36.20px;top:201.15px;font-size:14px;letter-spacing:-0.184px;">Comments</span>
<svg class="ic" style="top:243px" viewBox="0 0 20 20"><path fill-rule="evenodd" d="M10 1a9 9 0 1 0 0 18 9 9 0 0 0 0-18zM7.750 13.750h-1.500v-7.500h1.500v7.500zm6 0h-4.500v-1.500h4.500v1.500zm0-3h-4.500v-1.500h4.500v1.500zm0-3h-4.500v-1.500h4.500v1.500z"/></svg><span class="t" style="left:36.20px;top:246.15px;font-size:14px;letter-spacing:-0.139px;">Elementor</span>
<svg class="ic" style="top:277px" viewBox="0 0 20 20"><path fill-rule="evenodd" d="M18 6.500V8H5.500l-2 7H3V4.500c0-.280.220-.500.500-.500h4L9 6h8.500c.280 0 .500.220.500.500zM19.500 9l-2.400 7H3.800l2.400-7h13.300z"/></svg><span class="t" style="left:36.20px;top:280.15px;font-size:14px;letter-spacing:-0.264px;">Templates</span>
<svg class="ic" style="top:322px;fill:#fff" viewBox="0 0 20 20"><path fill-rule="evenodd" d="M14.480 11.060L7.410 3.990l1.500-1.500c.500-.560 2.300-.470 3.510.320 1.210.800 1.430 1.280 2.910 2.100 1.180.640 2.450 1.260 4.450.850zm-.710.710L6.700 4.700 4.930 6.470c-.390.390-.390 1.020 0 1.410l1.060 1.060c.390.390.390 1.030 0 1.420-.600.600-1.430 1.110-2.210 1.690-.350.260-.700.530-1.010.840C1.430 14.230.400 16.080 1.400 17.070c.990 1 2.840-.030 4.180-1.360.310-.310.580-.660.850-1.020.570-.780 1.080-1.610 1.690-2.210.390-.390 1.020-.390 1.410 0l1.060 1.060c.390.390 1.020.390 1.410 0z"/></svg><span class="t" style="left:36.20px;top:325.15px;font-size:14px;letter-spacing:-0.278px;color:#fff;">Appearance</span>
<svg class="ic" style="top:539px" viewBox="0 0 20 20"><path fill-rule="evenodd" d="M13.110 4.360L9.870 7.600 8 5.730l3.240-3.240c.350-.340 1.050-.200 1.560.320.520.510.660 1.210.310 1.550zm-8 1.770l.910-1.120 9.010 9.010-1.190.840c-.710.710-2.630 1.160-3.820 1.160H6.140L4.900 17.260c-.590.590-1.540.590-2.120 0-.590-.580-.590-1.530 0-2.120l1.240-1.240v-3.880c0-1.130.400-3.190 1.090-3.890zm7.260 3.970l3.240-3.240c.340-.350 1.040-.210 1.550.310.520.510.660 1.210.310 1.550l-3.240 3.250z"/></svg><span class="t" style="left:36.20px;top:542.15px;font-size:14px;letter-spacing:-0.253px;">Plugins</span>
<svg class="ic" style="top:573px" viewBox="0 0 20 20"><path fill-rule="evenodd" d="M10 9.250c-2.270 0-2.730-3.440-2.730-3.440C7 4.020 7.820 2 9.970 2c2.160 0 2.980 2.020 2.710 3.810 0 0-.410 3.440-2.680 3.440zm0 2.570L12.720 10c2.390 0 4.520 2.330 4.520 4.530v2.490s-3.650 1.130-7.240 1.130c-3.650 0-7.240-1.130-7.240-1.130v-2.490c0-2.250 1.940-4.480 4.470-4.480z"/></svg><span class="t" style="left:36.20px;top:576.15px;font-size:14px;transform:scaleX(0.9136);transform-origin:0 0;">Users</span>
<svg class="ic" style="top:607px" viewBox="0 0 20 20"><path fill-rule="evenodd" d="M16.680 9.770c-1.340 1.340-3.300 1.670-4.950.990l-5.410 6.520c-.990.990-2.590.990-3.580 0s-.990-2.590 0-3.570l6.520-5.420c-.680-1.650-.350-3.610.990-4.950 1.280-1.280 3.120-1.620 4.720-1.060l-2.890 2.890 2.820 2.820 2.860-2.870c.530 1.580.180 3.390-1.080 4.650zM3.810 16.210c.400.390 1.040.390 1.430 0 .400-.400.400-1.040 0-1.430-.390-.400-1.030-.400-1.430 0-.390.390-.390 1.030 0 1.430z"/></svg><span class="t" style="left:36.20px;top:610.15px;font-size:14px;letter-spacing:-0.346px;">Tools</span>
<svg class="ic" style="top:641px" viewBox="0 0 20 20"><path fill-rule="evenodd" d="M18 16V4c0-.550-.450-1-1-1H3c-.550 0-1 .450-1 1v12c0 .550.450 1 1 1h14c.550 0 1-.450 1-1zM8 11h1c.550 0 1 .450 1 1s-.450 1-1 1H8v1.500c0 .280-.220.500-.500.500s-.500-.220-.500-.500V13H6c-.550 0-1-.450-1-1s.450-1 1-1h1V5.500c0-.280.220-.500.500-.500s.500.220.500.500V11zm5-2h-1c-.550 0-1-.450-1-1s.450-1 1-1h1V5.500c0-.280.220-.500.500-.500s.500.220.500.500V7h1c.550 0 1 .450 1 1s-.450 1-1 1h-1v5.500c0 .280-.220.500-.500.500s-.500-.220-.500-.500V9z"/></svg><span class="t" style="left:36.20px;top:644.15px;font-size:14px;letter-spacing:-0.184px;">Settings</span>
<span class="t" style="left:12.00px;top:363.50px;font-size:13px;transform:scaleX(0.9220);transform-origin:0 0;color:#fff;font-weight:bold;">Themes</span>
<span class="t" style="left:12.00px;top:391.50px;font-size:13px;letter-spacing:-0.189px;color:#c3c4c7;">Customize</span>
<span class="t" style="left:12.00px;top:419.50px;font-size:13px;letter-spacing:0.057px;color:#c3c4c7;">Widgets</span>
<span class="t" style="left:12.00px;top:447.50px;font-size:13px;letter-spacing:-0.105px;color:#c3c4c7;">Menus</span>
<span class="t" style="left:12.00px;top:475.50px;font-size:13px;letter-spacing:-0.131px;color:#c3c4c7;">Background</span>
<span class="t" style="left:12.00px;top:503.50px;font-size:13px;letter-spacing:-0.130px;color:#c3c4c7;">Theme Editor</span>
<svg class="abs" style="left:5px;top:682px;width:26px;height:28px" viewBox="270 2 26 28"><path d="M289.600 6.200L278.600 26.300" stroke="#a7aaad" stroke-width="2.300" fill="none"/><path d="M277.500 9h9.700l4 3v10.900h-13.200a3.500 3.500 0 0 1 -3.500 -3.500v-7.400a3 3 0 0 1 3 -3z" fill="#a7aaad"/><path d="M288.300 9.300L281.300 22.800M279 12.600L283.300 20" stroke="#1d2327" stroke-width="1.900" fill="none"/></svg>
<span class="t" style="left:36.00px;top:689.15px;font-size:14px;transform:scaleX(0.8320);transform-origin:0 0;">SEO</span>
<div class="abs" style="left:66.500px;top:687.800px;width:18px;height:18px;border-radius:9px;background:#d63638"></div>
<span class="t" style="left:72.60px;top:691.49px;font-size:11px;color:#fff;">2</span>
<svg class="ic" style="top:720px" viewBox="0 0 20 20"><path fill-rule="evenodd" d="M10 2.160c4.330 0 7.840 3.510 7.840 7.840s-3.510 7.840-7.840 7.840S2.160 14.330 2.160 10 5.670 2.160 10 2.160zM11.600 13.600v-7.200L7 10z"/></svg><span class="t" style="left:36.00px;top:723.50px;font-size:13px;letter-spacing:-0.185px;color:#a7aaad;">Collapse menu</span>
</div>
<div id="bar">
<svg class="abs" style="left:7px;top:6px;width:20px;height:20px" viewBox="0 0 20 20" fill="#a7aaad"><path d="M20 10c0-5.51-4.49-10-10-10C4.48 0 0 4.49 0 10c0 5.520 4.480 10 10 10 5.510 0 10-4.480 10-10zM7.780 15.370L4.370 6.220c.550-.020 1.170-.080 1.170-.080.500-.060.440-1.130-.060-1.110 0 0-1.450.110-2.370.110-.180 0-.370 0-.580-.010C4.120 2.690 6.870 1.110 10 1.110c2.330 0 4.450.870 6.050 2.340-.680-.110-1.650.390-1.650 1.580 0 .740.450 1.360.900 2.100.350.610.550 1.360.550 2.460 0 1.490-1.400 5-1.400 5l-3.030-8.370c.540-.020.820-.170.820-.170.500-.050.440-1.250-.060-1.220 0 0-1.440.120-2.380.120-.870 0-2.330-.120-2.330-.120-.500-.030-.560 1.200-.060 1.220l.920.080 1.260 3.410zM17.410 10c.240-.640.740-1.870.430-4.250.700 1.290 1.050 2.710 1.050 4.250 0 3.290-1.730 6.240-4.400 7.780.970-2.590 1.940-5.200 2.920-7.780zM6.100 18.090C3.120 16.650 1.110 13.530 1.110 10c0-1.300.230-2.480.720-3.590C3.250 10.300 4.670 14.200 6.100 18.090zm4.030-6.630l2.580 6.980c-.860.290-1.760.450-2.710.450-.790 0-1.570-.110-2.290-.330.810-2.380 1.620-4.740 2.420-7.100z"/></svg>
<svg class="abs" style="left:42px;top:6px;width:20px;height:20px" viewBox="0 0 20 20" fill="#a7aaad"><path d="M16 8.500l1.530 1.530-1.060 1.060L10 4.620l-6.470 6.470-1.060-1.060L10 2.500l4 4v-2h2v4zm-6-2.460l6 5.990V18H4v-5.970zM12 17v-5H8v5h4z"/></svg>
<span class="t" style="left:68.30px;top:10.00px;font-size:13px;letter-spacing:-0.208px;">Test Machine</span>
<svg class="abs" style="left:158px;top:6px;width:20px;height:20px" viewBox="0 0 20 20" fill="#a7aaad"><path d="M5 2h9c1.100 0 2 .900 2 2v7c0 1.100-.900 2-2 2h-2l-5 5v-5H5c-1.100 0-2-.900-2-2V4c0-1.100.900-2 2-2z"/></svg>
<span class="t" style="left:184.00px;top:10.00px;font-size:13px;color:#a7aaad;">0</span>
<svg class="abs" style="left:206px;top:6px;width:20px;height:20px" viewBox="0 0 20 20" fill="#a7aaad"><path d="M17.200 6.700v3.600h-5.400v5.400H8.200v-5.400H2.800V6.700h5.400V1.300h3.600v5.400h5.400z"/></svg>
<span class="t" style="left:232.30px;top:10.00px;font-size:13px;letter-spacing:-0.254px;">New</span>
<svg class="abs" style="left:270px;top:2px;width:26px;height:28px" viewBox="270 2 26 28"><path d="M289.600 6.200L278.600 26.300" stroke="#a7aaad" stroke-width="2.300" fill="none"/><path d="M277.500 9h9.700l4 3v10.900h-13.200a3.500 3.500 0 0 1 -3.500 -3.500v-7.400a3 3 0 0 1 3 -3z" fill="#a7aaad"/><path d="M288.300 9.300L281.300 22.800M279 12.600L283.300 20" stroke="#1d2327" stroke-width="1.900" fill="none"/></svg>
<div class="abs" style="left:299px;top:6px;width:20px;height:20px;border-radius:10px;background:#d63638"></div>
<span class="t" style="left:305.40px;top:9.50px;font-size:13px;color:#fff;">2</span>
<svg class="abs" style="left:334px;top:2px;width:30px;height:28px" viewBox="334 2 30 28"><path d="M353.930 11.650A6.300 6.300 0 0 0 342.800 15.700" fill="none" stroke="#e0484c" stroke-width="4"/><path d="M338.400 15.200h8.800l-4.400 5.600z" fill="#e0484c"/><path d="M344.270 19.750A6.300 6.300 0 0 0 355.400 15.700" fill="none" stroke="#fff" stroke-width="4"/><path d="M351 16.200h8.800l-4.400 -5.600z" fill="#fff"/></svg>
<span class="t" style="left:367.30px;top:10.00px;font-size:13px;transform:scaleX(0.9214);transform-origin:0 0;">WP Reset</span>
</div>
</div>
</body>
</html>
